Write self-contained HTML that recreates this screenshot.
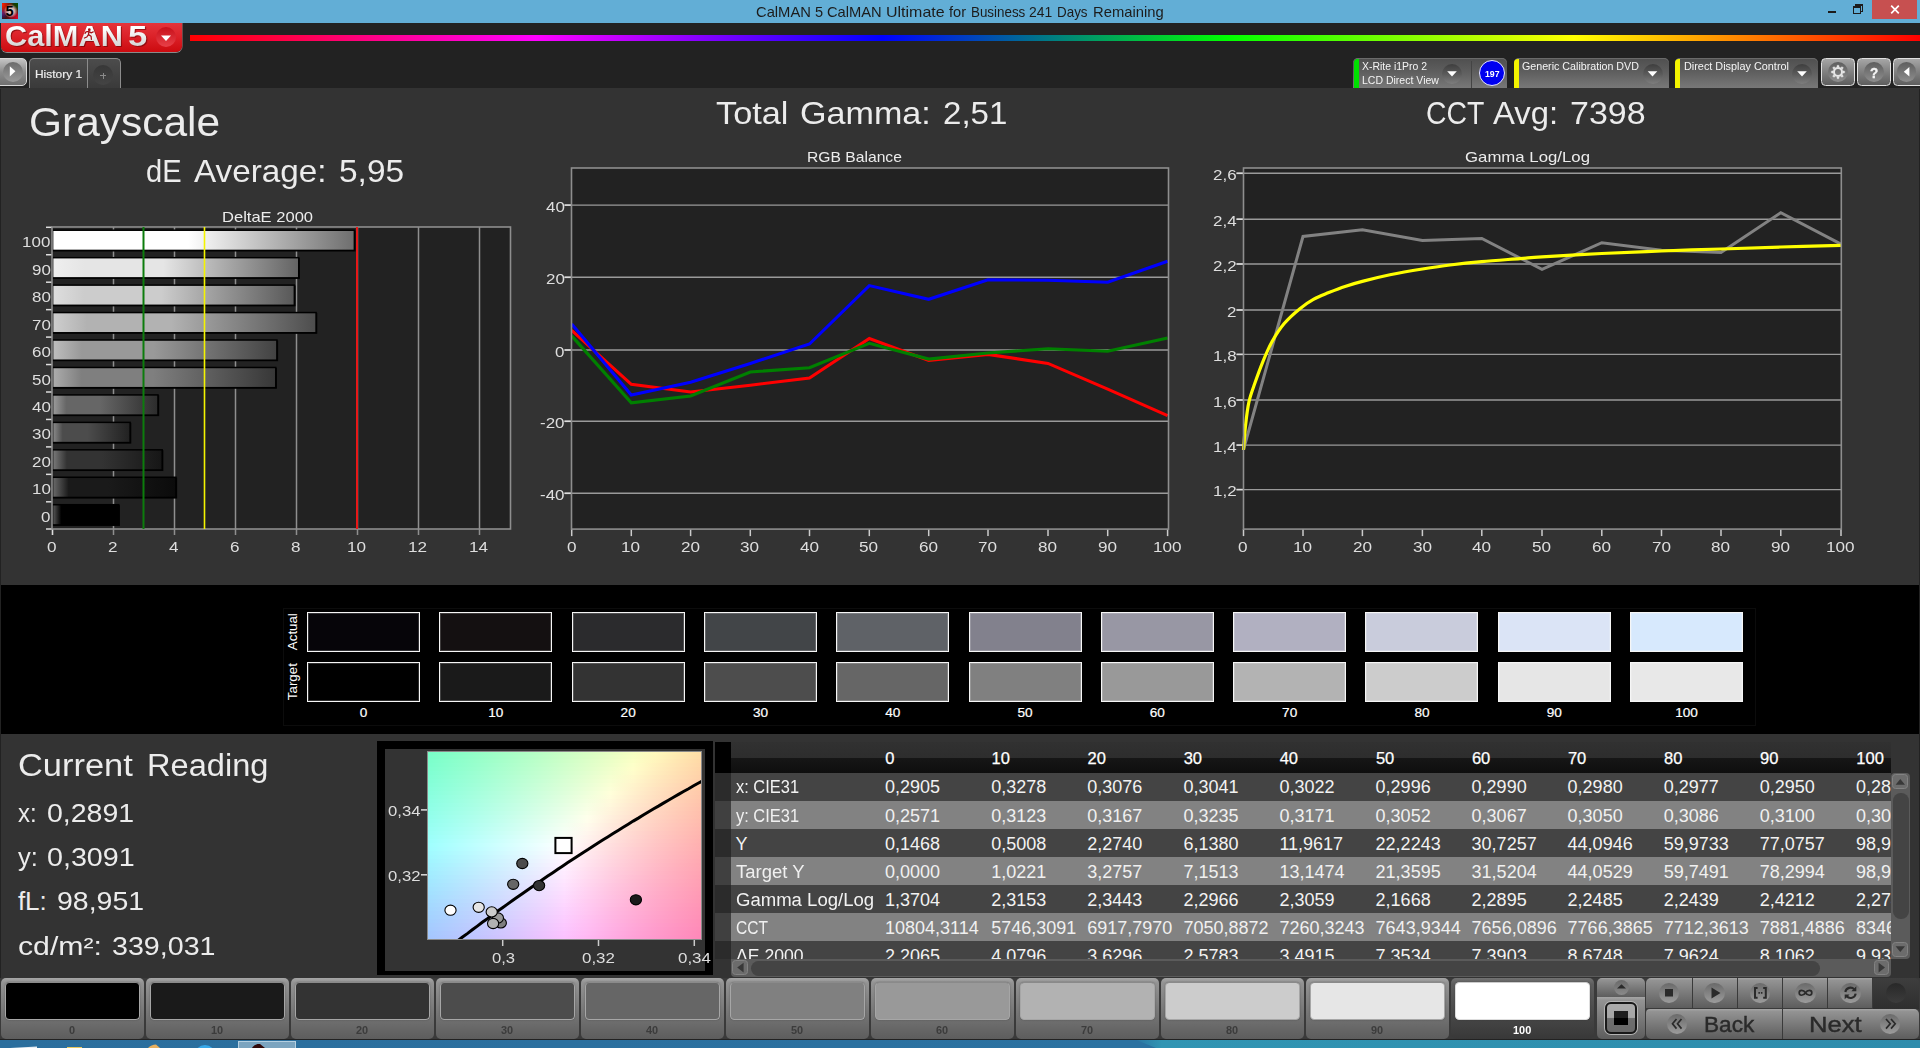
<!DOCTYPE html>
<html><head><meta charset="utf-8"><title>CalMAN 5</title>
<style>
html,body{margin:0;padding:0;}
html{overflow:hidden;width:1920px;height:1048px;background:#333;}
body{width:1920px;height:1048px;overflow:hidden;background:#333;position:relative;font-family:"Liberation Sans",sans-serif;}
.b{position:absolute;box-sizing:border-box;}
.t{position:absolute;white-space:nowrap;transform-origin:0 50%;display:block;}
svg{position:absolute;left:0;top:0;overflow:visible;}
.ck{position:absolute;border-radius:50%;}
</style></head><body>

<div class="b" style="left:0px;top:0px;width:1920px;height:23px;background:#62aed6;"></div>
<div class="b" style="left:2px;top:3px;width:16px;height:16px;background:radial-gradient(circle at 55% 50%,rgba(235,245,225,.95) 0,rgba(240,200,200,.8) 32%,rgba(255,255,255,0) 58%),radial-gradient(circle at 0% 10%,#ff2000 0,rgba(255,32,0,0) 55%),radial-gradient(circle at 100% 5%,#005000 0,rgba(0,80,0,0) 50%),radial-gradient(circle at 100% 95%,#e00028 0,rgba(224,0,40,0) 55%),radial-gradient(circle at 0% 62%,#3020a0 0,rgba(48,32,160,0) 35%),#401010;overflow:hidden;"><span class="t" style="left:3.6px;top:0.8px;font-size:14.5px;line-height:14.5px;font-weight:bold;color:#000;">5</span></div>
<span class="t" style="left:755.80px;top:3.90px;font-size:15px;line-height:15px;color:#1c1c1c;transform:scaleX(0.9830);">CalMAN</span>
<span class="t" style="left:814.80px;top:3.90px;font-size:15px;line-height:15px;color:#1c1c1c;transform:scaleX(0.9697);">5</span>
<span class="t" style="left:826.80px;top:3.90px;font-size:15px;line-height:15px;color:#1c1c1c;transform:scaleX(0.9794);">CalMAN</span>
<span class="t" style="left:885.60px;top:3.90px;font-size:15px;line-height:15px;color:#1c1c1c;transform:scaleX(1.0655);">Ultimate</span>
<span class="t" style="left:948.60px;top:3.90px;font-size:15px;line-height:15px;color:#1c1c1c;transform:scaleX(0.9714);">for</span>
<span class="t" style="left:970.80px;top:3.90px;font-size:15px;line-height:15px;color:#1c1c1c;transform:scaleX(0.8922);">Business</span>
<span class="t" style="left:1028.60px;top:3.90px;font-size:15px;line-height:15px;color:#1c1c1c;transform:scaleX(0.9280);">241</span>
<span class="t" style="left:1057.40px;top:3.90px;font-size:15px;line-height:15px;color:#1c1c1c;transform:scaleX(0.8934);">Days</span>
<span class="t" style="left:1092.80px;top:3.90px;font-size:15px;line-height:15px;color:#1c1c1c;transform:scaleX(0.9854);">Remaining</span>
<div class="b" style="left:1828px;top:11px;width:8px;height:2px;background:#1c1c1c;"></div>
<div class="b" style="left:1855px;top:4px;width:8px;height:8px;border:1px solid #1c1c1c;border-top-width:2px;"></div>
<div class="b" style="left:1853px;top:6px;width:8px;height:8px;border:1px solid #1c1c1c;border-top-width:2px;background:#62aed6;"></div>
<div class="b" style="left:1872px;top:0px;width:45px;height:19px;background:#c75050;"></div>
<svg width="1920" height="23"><path d="M1891.2 5.7l7.6 7.6M1898.8 5.7l-7.6 7.6" stroke="#fff" stroke-width="1.7" fill="none"/></svg>
<div class="b" style="left:0px;top:23px;width:1920px;height:65.2px;background:#222;"></div>
<div class="b" style="left:190px;top:35.3px;width:1730px;height:5.5px;background:linear-gradient(90deg,#ff0000 0%,#ff00ff 20%,#0000ff 40%,#00ff00 60%,#ffff00 80%,#ff0000 100%);"></div>
<div class="b" style="left:1px;top:23px;width:181px;height:29px;background:linear-gradient(180deg,#e4353c 0%,#dc2229 45%,#cc0a0f 100%);border-radius:0 0 6px 6px;box-shadow:0 1px 0 #8a8a8a,1px 0 0 #6a4a4a;"></div>
<span class="t" style="left:5.20px;top:21.03px;font-size:29.5px;line-height:29.5px;color:#f0f0f0;font-weight:bold;transform:scaleX(1.0425);background:linear-gradient(180deg,#fff 25%,#d4d4d4 85%);-webkit-background-clip:text;background-clip:text;-webkit-text-fill-color:transparent;filter:drop-shadow(1px 1px 0.6px rgba(90,0,0,.55));">CalMAN</span>
<span class="t" style="left:128.20px;top:21.03px;font-size:29.5px;line-height:29.5px;color:#f0f0f0;font-weight:bold;transform:scaleX(1.1758);background:linear-gradient(180deg,#fff 25%,#d4d4d4 85%);-webkit-background-clip:text;background-clip:text;-webkit-text-fill-color:transparent;filter:drop-shadow(1px 1px 0.6px rgba(90,0,0,.55));">5</span>
<div class="ck" style="left:156px;top:27px;width:20px;height:20px;background:linear-gradient(180deg,#c8101a,#e84048);"></div>
<svg width="200" height="60"><path d="M161 35.5h10l-5 5.5z" fill="#fff"/><path d="M89.3 28.2L84.6 39.2H94z" fill="#f1f1f1"/><g stroke="#a40e14" stroke-width="1.25" fill="none" stroke-linecap="round" stroke-linejoin="round"><circle cx="89.3" cy="29.7" r="0.75" fill="#a40e14"/><path d="M89 31.2L88.45 34.6M88.8 31.4L86 31.8L85 33.3M89.2 31.9L91.4 32.8L93.2 31.9M88.45 34.6L86.8 37L84.5 38M88.45 34.6L91.1 36.2L91.4 39.3"/></g></svg>
<div class="b" style="left:-2px;top:58px;width:29.2px;height:27.9px;border:1px solid #d8d8d8;border-radius:0 5px 5px 0;background:linear-gradient(180deg,#c4c4c4,#8c8c8c 50%,#707070);"></div>
<div class="ck" style="left:3px;top:62px;width:20px;height:20px;background:linear-gradient(180deg,#6c6c6c,#9a9a9a);"></div>
<svg width="200" height="100"><path d="M9.8 66.2l5.6 5.1-5.6 5.1z" fill="#fff"/></svg>
<div class="b" style="left:29px;top:58px;width:91.8px;height:30.2px;border:1px solid #8c8c8c;border-bottom:none;border-radius:5px 5px 0 0;background:linear-gradient(180deg,#4c4c4c,#3a3a3a);"></div>
<div class="b" style="left:87px;top:59px;width:1px;height:29.2px;background:#8c8c8c;"></div>
<span class="t" style="left:35.20px;top:68.61px;font-size:11.8px;line-height:11.8px;color:#ececec;transform:scaleX(1.0119);-webkit-text-stroke:0.2px #ececec;">History 1</span>
<div class="ck" style="left:93px;top:65px;width:20px;height:20px;background:linear-gradient(180deg,#373737,#444);"></div>
<div class="b" style="left:100px;top:75px;width:6px;height:1px;background:#8a8a8a;"></div>
<div class="b" style="left:102.5px;top:72.5px;width:1px;height:6px;background:#8a8a8a;"></div>
<div class="b" style="left:1353px;top:58px;width:153.8px;height:30.2px;border-radius:5px 5px 0 0;background:linear-gradient(180deg,#4f4f4f,#5e5e5e 45%,#787878);box-shadow:inset 0 1px 0 #6a6a6a;"></div><div class="b" style="left:1353.6px;top:58.6px;width:5.3px;height:29.6px;background:#00e000;border-radius:4px 0 0 0;"></div><div class="ck" style="left:1442px;top:63.5px;width:20px;height:20px;background:linear-gradient(180deg,#3e3e3e,#5a5a5a 50%,#7e7e7e);"></div><svg width="1920" height="100"><path d="M1447.2 71.2h9.6l-4.8 5.2z" fill="#fff"/></svg>
<span class="t" style="left:1362.00px;top:61.07px;font-size:11.5px;line-height:11.5px;color:#f4f4f4;transform:scaleX(0.9091);">X-Rite i1Pro 2</span>
<span class="t" style="left:1362.00px;top:74.87px;font-size:11.5px;line-height:11.5px;color:#f4f4f4;transform:scaleX(0.9139);">LCD Direct View</span>
<div class="b" style="left:1471px;top:61px;width:1px;height:27.2px;background:#444;"></div>
<div class="ck" style="left:1478.5px;top:60px;width:26px;height:26px;background:#0000f0;border:1px solid #e8e8ff;box-sizing:border-box;"></div>
<span class="t" style="left:1484.50px;top:68.56px;font-size:9.5px;line-height:9.5px;color:#fff;font-weight:bold;transform:scaleX(0.9206);">197</span>
<div class="b" style="left:1513.5px;top:58px;width:155px;height:30.2px;border-radius:5px 5px 0 0;background:linear-gradient(180deg,#4f4f4f,#5e5e5e 45%,#787878);box-shadow:inset 0 1px 0 #6a6a6a;"></div><div class="b" style="left:1514.1px;top:58.6px;width:5.3px;height:29.6px;background:#f4f400;border-radius:4px 0 0 0;"></div><div class="ck" style="left:1642.5px;top:63.5px;width:20px;height:20px;background:linear-gradient(180deg,#3e3e3e,#5a5a5a 50%,#7e7e7e);"></div><svg width="1920" height="100"><path d="M1647.7 71.2h9.6l-4.8 5.2z" fill="#fff"/></svg>
<span class="t" style="left:1522.00px;top:61.07px;font-size:11.5px;line-height:11.5px;color:#f4f4f4;transform:scaleX(0.9286);">Generic Calibration DVD</span>
<div class="b" style="left:1674.6px;top:58px;width:143.5px;height:30.2px;border-radius:5px 5px 0 0;background:linear-gradient(180deg,#4f4f4f,#5e5e5e 45%,#787878);box-shadow:inset 0 1px 0 #6a6a6a;"></div><div class="b" style="left:1675.1999999999998px;top:58.6px;width:5.3px;height:29.6px;background:#f4f400;border-radius:4px 0 0 0;"></div><div class="ck" style="left:1792px;top:63.5px;width:20px;height:20px;background:linear-gradient(180deg,#3e3e3e,#5a5a5a 50%,#7e7e7e);"></div><svg width="1920" height="100"><path d="M1797.2 71.2h9.6l-4.8 5.2z" fill="#fff"/></svg>
<span class="t" style="left:1684.00px;top:61.07px;font-size:11.5px;line-height:11.5px;color:#f4f4f4;transform:scaleX(0.9438);">Direct Display Control</span>
<div class="b" style="left:1821px;top:58px;width:34px;height:28.2px;border:1px solid #e0e0e0;border-radius:4.5px;background:linear-gradient(180deg,#a6a6a6,#808080 50%,#5e5e5e);"></div><div class="ck" style="left:1828px;top:62.1px;width:19.8px;height:19.8px;background:linear-gradient(180deg,#5e5e5e,#8e8e8e);"></div>
<div class="b" style="left:1857px;top:58px;width:34px;height:28.2px;border:1px solid #e0e0e0;border-radius:4.5px;background:linear-gradient(180deg,#a6a6a6,#808080 50%,#5e5e5e);"></div><div class="ck" style="left:1864px;top:62.1px;width:19.8px;height:19.8px;background:linear-gradient(180deg,#5e5e5e,#8e8e8e);"></div>
<div class="b" style="left:1893px;top:58px;width:34px;height:28.2px;border:1px solid #e0e0e0;border-radius:4.5px;background:linear-gradient(180deg,#a6a6a6,#808080 50%,#5e5e5e);"></div><div class="ck" style="left:1896.7px;top:62.1px;width:19.8px;height:19.8px;background:linear-gradient(180deg,#5e5e5e,#8e8e8e);"></div>
<svg width="1920" height="100"><g transform="translate(1838 72)" fill="none" stroke="#e6e6e6"><circle r="4" stroke-width="2"/><path d="M-1.2 -4.8L-0.8 -6.7H0.8L1.2 -4.8z" fill="#e6e6e6" stroke-width="0.4" transform="rotate(0)"/><path d="M-1.2 -4.8L-0.8 -6.7H0.8L1.2 -4.8z" fill="#e6e6e6" stroke-width="0.4" transform="rotate(45)"/><path d="M-1.2 -4.8L-0.8 -6.7H0.8L1.2 -4.8z" fill="#e6e6e6" stroke-width="0.4" transform="rotate(90)"/><path d="M-1.2 -4.8L-0.8 -6.7H0.8L1.2 -4.8z" fill="#e6e6e6" stroke-width="0.4" transform="rotate(135)"/><path d="M-1.2 -4.8L-0.8 -6.7H0.8L1.2 -4.8z" fill="#e6e6e6" stroke-width="0.4" transform="rotate(180)"/><path d="M-1.2 -4.8L-0.8 -6.7H0.8L1.2 -4.8z" fill="#e6e6e6" stroke-width="0.4" transform="rotate(225)"/><path d="M-1.2 -4.8L-0.8 -6.7H0.8L1.2 -4.8z" fill="#e6e6e6" stroke-width="0.4" transform="rotate(270)"/><path d="M-1.2 -4.8L-0.8 -6.7H0.8L1.2 -4.8z" fill="#e6e6e6" stroke-width="0.4" transform="rotate(315)"/></g><path d="M1909.4 66.9v9.6l-5.6-4.8z" fill="#fff"/></svg>
<span class="t" style="left:1870.20px;top:65.23px;font-size:15.2px;line-height:15.2px;color:#f4f4f4;font-weight:bold;transform:scaleX(0.8865);-webkit-text-stroke:0.4px #f4f4f4;">?</span>
<div class="b" style="left:0px;top:89px;width:1px;height:889px;background:#222;"></div>
<div class="b" style="left:1919px;top:89px;width:1px;height:889px;background:#222;"></div>
<span class="t" style="left:29.20px;top:102.02px;font-size:40.5px;line-height:40.5px;color:#ececec;transform:scaleX(1.0480);">Grayscale</span>
<span class="t" style="left:145.80px;top:156.48px;font-size:30.5px;line-height:30.5px;color:#ececec;transform:scaleX(0.9530);">dE</span>
<span class="t" style="left:193.80px;top:156.48px;font-size:30.5px;line-height:30.5px;color:#ececec;transform:scaleX(1.0905);">Average:</span>
<span class="t" style="left:338.80px;top:156.48px;font-size:30.5px;line-height:30.5px;color:#ececec;transform:scaleX(1.0970);">5,95</span>
<span class="t" style="left:222.00px;top:209.00px;font-size:15px;line-height:15px;color:#ececec;transform:scaleX(1.1030);">DeltaE 2000</span>
<span class="t" style="left:715.80px;top:97.58px;font-size:30.5px;line-height:30.5px;color:#ececec;transform:scaleX(1.1240);">Total</span>
<span class="t" style="left:800.00px;top:97.58px;font-size:30.5px;line-height:30.5px;color:#ececec;transform:scaleX(1.1179);">Gamma:</span>
<span class="t" style="left:942.50px;top:97.58px;font-size:30.5px;line-height:30.5px;color:#ececec;transform:scaleX(1.0835);">2,51</span>
<span class="t" style="left:807.00px;top:149.30px;font-size:15px;line-height:15px;color:#ececec;transform:scaleX(1.0440);">RGB Balance</span>
<span class="t" style="left:1425.60px;top:97.58px;font-size:30.5px;line-height:30.5px;color:#ececec;transform:scaleX(0.9307);">CCT</span>
<span class="t" style="left:1493.30px;top:97.58px;font-size:30.5px;line-height:30.5px;color:#ececec;transform:scaleX(1.0760);">Avg:</span>
<span class="t" style="left:1570.20px;top:97.58px;font-size:30.5px;line-height:30.5px;color:#ececec;transform:scaleX(1.1144);">7398</span>
<span class="t" style="left:1465.00px;top:149.30px;font-size:15px;line-height:15px;color:#ececec;transform:scaleX(1.1186);">Gamma Log/Log</span>
<svg width="1920" height="600" shape-rendering="auto">
<rect x="52" y="227" width="458.5" height="302" fill="#222222"/>
<path d="M113.5 227V535" stroke="#8f8f8f" stroke-width="1.5"/>
<path d="M174.5 227V535" stroke="#8f8f8f" stroke-width="1.5"/>
<path d="M235.5 227V535" stroke="#8f8f8f" stroke-width="1.5"/>
<path d="M296.5 227V535" stroke="#8f8f8f" stroke-width="1.5"/>
<path d="M357.5 227V535" stroke="#8f8f8f" stroke-width="1.5"/>
<path d="M418.5 227V535" stroke="#8f8f8f" stroke-width="1.5"/>
<path d="M479.5 227V535" stroke="#8f8f8f" stroke-width="1.5"/>
<path d="M52.5 529v6" stroke="#ddd" stroke-width="1.6"/>
<defs>
<linearGradient id="g0" x1="0" x2="1" y1="0" y2="0"><stop offset="0" stop-color="#5c5c5c"/><stop offset="0.13" stop-color="#000000"/><stop offset="0.45" stop-color="#000000"/><stop offset="1" stop-color="#000000"/></linearGradient>
<linearGradient id="g10" x1="0" x2="1" y1="0" y2="0"><stop offset="0" stop-color="#6c6c6c"/><stop offset="0.13" stop-color="#1a1a1a"/><stop offset="0.45" stop-color="#1a1a1a"/><stop offset="1" stop-color="#0b0b0b"/></linearGradient>
<linearGradient id="g20" x1="0" x2="1" y1="0" y2="0"><stop offset="0" stop-color="#7c7c7c"/><stop offset="0.13" stop-color="#333333"/><stop offset="0.45" stop-color="#333333"/><stop offset="1" stop-color="#161616"/></linearGradient>
<linearGradient id="g30" x1="0" x2="1" y1="0" y2="0"><stop offset="0" stop-color="#8d8d8d"/><stop offset="0.13" stop-color="#4c4c4c"/><stop offset="0.45" stop-color="#4c4c4c"/><stop offset="1" stop-color="#212121"/></linearGradient>
<linearGradient id="g40" x1="0" x2="1" y1="0" y2="0"><stop offset="0" stop-color="#9d9d9d"/><stop offset="0.13" stop-color="#666666"/><stop offset="0.45" stop-color="#666666"/><stop offset="1" stop-color="#2c2c2c"/></linearGradient>
<linearGradient id="g50" x1="0" x2="1" y1="0" y2="0"><stop offset="0" stop-color="#adadad"/><stop offset="0.13" stop-color="#7f7f7f"/><stop offset="0.45" stop-color="#7f7f7f"/><stop offset="1" stop-color="#373737"/></linearGradient>
<linearGradient id="g60" x1="0" x2="1" y1="0" y2="0"><stop offset="0" stop-color="#bebebe"/><stop offset="0.13" stop-color="#999999"/><stop offset="0.45" stop-color="#999999"/><stop offset="1" stop-color="#424242"/></linearGradient>
<linearGradient id="g70" x1="0" x2="1" y1="0" y2="0"><stop offset="0" stop-color="#cecece"/><stop offset="0.13" stop-color="#b2b2b2"/><stop offset="0.45" stop-color="#b2b2b2"/><stop offset="1" stop-color="#4d4d4d"/></linearGradient>
<linearGradient id="g80" x1="0" x2="1" y1="0" y2="0"><stop offset="0" stop-color="#dedede"/><stop offset="0.13" stop-color="#cccccc"/><stop offset="0.45" stop-color="#cccccc"/><stop offset="1" stop-color="#585858"/></linearGradient>
<linearGradient id="g90" x1="0" x2="1" y1="0" y2="0"><stop offset="0" stop-color="#efefef"/><stop offset="0.13" stop-color="#e5e5e5"/><stop offset="0.45" stop-color="#e5e5e5"/><stop offset="1" stop-color="#636363"/></linearGradient>
<linearGradient id="g100" x1="0" x2="1" y1="0" y2="0"><stop offset="0" stop-color="#ffffff"/><stop offset="0.13" stop-color="#ffffff"/><stop offset="0.45" stop-color="#ffffff"/><stop offset="1" stop-color="#6e6e6e"/></linearGradient>
</defs>
<rect x="52.4" y="505.12" width="67.60" height="20.8" fill="#060606"/>
<rect x="52.6" y="504.72" width="66.20"  height="20.2" fill="url(#g0)" stroke="#000" stroke-width="1.5"/>
<path d="M46 501.80h6" stroke="#ddd" stroke-width="1.5"/>
<rect x="52.4" y="477.68" width="124.73" height="20.8" fill="#060606"/>
<rect x="52.6" y="477.27" width="123.33"  height="20.2" fill="url(#g10)" stroke="#000" stroke-width="1.5"/>
<path d="M46 474.35h6" stroke="#ddd" stroke-width="1.5"/>
<rect x="52.4" y="450.23" width="111.00" height="20.8" fill="#060606"/>
<rect x="52.6" y="449.82" width="109.60"  height="20.2" fill="url(#g20)" stroke="#000" stroke-width="1.5"/>
<path d="M46 446.90h6" stroke="#ddd" stroke-width="1.5"/>
<rect x="52.4" y="422.78" width="78.94" height="20.8" fill="#060606"/>
<rect x="52.6" y="422.38" width="77.54"  height="20.2" fill="url(#g30)" stroke="#000" stroke-width="1.5"/>
<path d="M46 419.45h6" stroke="#ddd" stroke-width="1.5"/>
<rect x="52.4" y="395.32" width="106.79" height="20.8" fill="#060606"/>
<rect x="52.6" y="394.92" width="105.39"  height="20.2" fill="url(#g40)" stroke="#000" stroke-width="1.5"/>
<path d="M46 392.00h6" stroke="#ddd" stroke-width="1.5"/>
<rect x="52.4" y="367.88" width="224.58" height="20.8" fill="#060606"/>
<rect x="52.6" y="367.48" width="223.18"  height="20.2" fill="url(#g50)" stroke="#000" stroke-width="1.5"/>
<path d="M46 364.55h6" stroke="#ddd" stroke-width="1.5"/>
<rect x="52.4" y="340.43" width="225.70" height="20.8" fill="#060606"/>
<rect x="52.6" y="340.02" width="224.30"  height="20.2" fill="url(#g60)" stroke="#000" stroke-width="1.5"/>
<path d="M46 337.10h6" stroke="#ddd" stroke-width="1.5"/>
<rect x="52.4" y="312.98" width="264.88" height="20.8" fill="#060606"/>
<rect x="52.6" y="312.57" width="263.48"  height="20.2" fill="url(#g70)" stroke="#000" stroke-width="1.5"/>
<path d="M46 309.65h6" stroke="#ddd" stroke-width="1.5"/>
<rect x="52.4" y="285.53" width="243.15" height="20.8" fill="#060606"/>
<rect x="52.6" y="285.12" width="241.75"  height="20.2" fill="url(#g80)" stroke="#000" stroke-width="1.5"/>
<path d="M46 282.20h6" stroke="#ddd" stroke-width="1.5"/>
<rect x="52.4" y="258.08" width="247.54" height="20.8" fill="#060606"/>
<rect x="52.6" y="257.68" width="246.14"  height="20.2" fill="url(#g90)" stroke="#000" stroke-width="1.5"/>
<path d="M46 254.75h6" stroke="#ddd" stroke-width="1.5"/>
<rect x="52.4" y="230.62" width="303.17" height="20.8" fill="#060606"/>
<rect x="52.6" y="230.22" width="301.76"  height="20.2" fill="url(#g100)" stroke="#000" stroke-width="1.5"/>
<path d="M46 227.30h6" stroke="#ddd" stroke-width="1.5"/>
<path d="M46 529h6" stroke="#ddd" stroke-width="1.5"/>
<rect x="52" y="227" width="458.5" height="302" fill="none" stroke="#8e8e8e" stroke-width="1.6"/>
<path d="M143.5 227V529" stroke="#0c7c0c" stroke-width="2"/>
<path d="M204.5 227V529" stroke="#f4f400" stroke-width="1.6"/>
<path d="M357 227V529" stroke="#e81818" stroke-width="2"/>
<rect x="571.5" y="168" width="597.0" height="361.1" fill="#222222"/>
<path d="M564.5 205.1H1168.5" stroke="#9a9a9a" stroke-width="1.4"/>
<path d="M564.5 205.1h7" stroke="#ddd" stroke-width="1.6"/>
<path d="M564.5 277.3H1168.5" stroke="#9a9a9a" stroke-width="1.4"/>
<path d="M564.5 277.3h7" stroke="#ddd" stroke-width="1.6"/>
<path d="M564.5 350H1168.5" stroke="#9a9a9a" stroke-width="1.4"/>
<path d="M564.5 350h7" stroke="#ddd" stroke-width="1.6"/>
<path d="M564.5 421.3H1168.5" stroke="#9a9a9a" stroke-width="1.4"/>
<path d="M564.5 421.3h7" stroke="#ddd" stroke-width="1.6"/>
<path d="M564.5 493.3H1168.5" stroke="#9a9a9a" stroke-width="1.4"/>
<path d="M564.5 493.3h7" stroke="#ddd" stroke-width="1.6"/>
<path d="M571.7 529.1v7" stroke="#ccc" stroke-width="1.5"/>
<path d="M631.3 529.1v7" stroke="#ccc" stroke-width="1.5"/>
<path d="M690.6 529.1v7" stroke="#ccc" stroke-width="1.5"/>
<path d="M750.3 529.1v7" stroke="#ccc" stroke-width="1.5"/>
<path d="M809.5 529.1v7" stroke="#ccc" stroke-width="1.5"/>
<path d="M869.3 529.1v7" stroke="#ccc" stroke-width="1.5"/>
<path d="M928.7 529.1v7" stroke="#ccc" stroke-width="1.5"/>
<path d="M988 529.1v7" stroke="#ccc" stroke-width="1.5"/>
<path d="M1048 529.1v7" stroke="#ccc" stroke-width="1.5"/>
<path d="M1107.7 529.1v7" stroke="#ccc" stroke-width="1.5"/>
<path d="M1167.6 529.1v7" stroke="#ccc" stroke-width="1.5"/>
<clipPath id="crgb"><rect x="570.0" y="168" width="598.5" height="361.1"/></clipPath><g clip-path="url(#crgb)">
<polyline points="571.7,330.4 631.3,384.3 690.6,392 750.3,385.2 809.5,378 869.3,338.5 928.7,360.4 988,354.4 1048,363.4 1107.7,389.1 1167.6,415.7" fill="none" stroke="#ff0000" stroke-width="3.1" stroke-linejoin="miter"/>
<polyline points="571.7,335.9 631.3,402.9 690.6,396 750.3,372 809.5,367.7 869.3,343.3 928.7,359.1 988,353 1048,348.8 1107.7,351.3 1167.6,338.1" fill="none" stroke="#008000" stroke-width="3.1" stroke-linejoin="miter"/>
<polyline points="571.7,323.9 631.3,395.1 690.6,382.3 750.3,363.4 809.5,344 869.3,285.6 928.7,299.3 988,279.7 1048,280.2 1107.7,282.3 1167.6,261.2" fill="none" stroke="#0000ff" stroke-width="3.1" stroke-linejoin="miter"/>
</g>
<rect x="571.5" y="168" width="597.0" height="361.1" fill="none" stroke="#8e8e8e" stroke-width="1.6"/>
<rect x="1243.5" y="168" width="597.8" height="361.1" fill="#222222"/>
<path d="M1236.5 173.3H1841.3" stroke="#9a9a9a" stroke-width="1.4"/>
<path d="M1236.5 173.3h7" stroke="#ddd" stroke-width="1.6"/>
<path d="M1236.5 219.2H1841.3" stroke="#9a9a9a" stroke-width="1.4"/>
<path d="M1236.5 219.2h7" stroke="#ddd" stroke-width="1.6"/>
<path d="M1236.5 264H1841.3" stroke="#9a9a9a" stroke-width="1.4"/>
<path d="M1236.5 264h7" stroke="#ddd" stroke-width="1.6"/>
<path d="M1236.5 310H1841.3" stroke="#9a9a9a" stroke-width="1.4"/>
<path d="M1236.5 310h7" stroke="#ddd" stroke-width="1.6"/>
<path d="M1236.5 354.4H1841.3" stroke="#9a9a9a" stroke-width="1.4"/>
<path d="M1236.5 354.4h7" stroke="#ddd" stroke-width="1.6"/>
<path d="M1236.5 400H1841.3" stroke="#9a9a9a" stroke-width="1.4"/>
<path d="M1236.5 400h7" stroke="#ddd" stroke-width="1.6"/>
<path d="M1236.5 445.1H1841.3" stroke="#9a9a9a" stroke-width="1.4"/>
<path d="M1236.5 445.1h7" stroke="#ddd" stroke-width="1.6"/>
<path d="M1236.5 489.6H1841.3" stroke="#9a9a9a" stroke-width="1.4"/>
<path d="M1236.5 489.6h7" stroke="#ddd" stroke-width="1.6"/>
<path d="M1243.5 529.1v7" stroke="#ccc" stroke-width="1.5"/>
<path d="M1303 529.1v7" stroke="#ccc" stroke-width="1.5"/>
<path d="M1362.4 529.1v7" stroke="#ccc" stroke-width="1.5"/>
<path d="M1422.4 529.1v7" stroke="#ccc" stroke-width="1.5"/>
<path d="M1481.8 529.1v7" stroke="#ccc" stroke-width="1.5"/>
<path d="M1542 529.1v7" stroke="#ccc" stroke-width="1.5"/>
<path d="M1601.8 529.1v7" stroke="#ccc" stroke-width="1.5"/>
<path d="M1661.5 529.1v7" stroke="#ccc" stroke-width="1.5"/>
<path d="M1721 529.1v7" stroke="#ccc" stroke-width="1.5"/>
<path d="M1780.8 529.1v7" stroke="#ccc" stroke-width="1.5"/>
<path d="M1841 529.1v7" stroke="#ccc" stroke-width="1.5"/>
<clipPath id="cgam"><rect x="1241.5" y="168" width="599.8" height="361.1"/></clipPath><g clip-path="url(#cgam)">
<polyline points="1243.5,449.5 1303,236.5 1362.4,229.7 1422.4,240.5 1481.8,238.5 1542,269.4 1601.8,242.7 1661.5,250.3 1721,252.5 1780.8,212.7 1841,244.1" fill="none" stroke="#828282" stroke-width="3"/>
<path d="M1243.5 450C1243.8 445.9 1244.6 433.8 1245.5 425.7C1246.4 417.6 1247.4 408.8 1249 401.6C1250.6 394.5 1252.7 389.4 1255 382.8C1257.3 376.2 1259.9 369.0 1262.7 362.1C1265.5 355.2 1268.5 347.9 1272.1 341.5C1275.7 335.1 1279.6 328.9 1284.2 323.5C1288.8 318.1 1294.7 312.9 1299.6 308.9C1304.5 304.9 1308.5 302.1 1313.4 299.4C1318.3 296.7 1323.5 294.8 1328.8 292.6C1334.1 290.5 1339.4 288.4 1345 286.5C1350.6 284.6 1354.8 283.3 1362.3 281.4C1369.8 279.4 1380.0 276.9 1390 274.8C1400.0 272.7 1412.4 270.6 1422.4 269C1432.4 267.4 1440.1 266.2 1450 265C1459.9 263.8 1470.0 262.7 1481.7 261.6C1493.4 260.5 1510.0 259.4 1520 258.6C1530.0 257.8 1528.4 257.7 1542 256.8C1555.6 256.0 1581.9 254.5 1601.8 253.5C1621.7 252.5 1641.6 251.8 1661.5 251C1681.4 250.2 1701.1 249.7 1721 249C1740.9 248.3 1760.8 247.6 1780.8 247C1800.8 246.4 1831.0 245.6 1841 245.3" fill="none" stroke="#ffff00" stroke-width="3.2" stroke-linejoin="round"/>
</g>
<rect x="1243.5" y="168" width="597.8" height="361.1" fill="none" stroke="#8e8e8e" stroke-width="1.6"/>
</svg>
<span class="t" style="left:41.29px;top:509.81px;font-size:14.9px;line-height:14.9px;color:#dedede;transform:scaleX(1.1400);">0</span>
<span class="t" style="left:31.78px;top:482.36px;font-size:14.9px;line-height:14.9px;color:#dedede;transform:scaleX(1.1400);">10</span>
<span class="t" style="left:31.78px;top:454.91px;font-size:14.9px;line-height:14.9px;color:#dedede;transform:scaleX(1.1400);">20</span>
<span class="t" style="left:31.78px;top:427.46px;font-size:14.9px;line-height:14.9px;color:#dedede;transform:scaleX(1.1400);">30</span>
<span class="t" style="left:31.78px;top:400.01px;font-size:14.9px;line-height:14.9px;color:#dedede;transform:scaleX(1.1400);">40</span>
<span class="t" style="left:31.78px;top:372.56px;font-size:14.9px;line-height:14.9px;color:#dedede;transform:scaleX(1.1400);">50</span>
<span class="t" style="left:31.78px;top:345.11px;font-size:14.9px;line-height:14.9px;color:#dedede;transform:scaleX(1.1400);">60</span>
<span class="t" style="left:31.78px;top:317.66px;font-size:14.9px;line-height:14.9px;color:#dedede;transform:scaleX(1.1400);">70</span>
<span class="t" style="left:31.78px;top:290.21px;font-size:14.9px;line-height:14.9px;color:#dedede;transform:scaleX(1.1400);">80</span>
<span class="t" style="left:31.78px;top:262.76px;font-size:14.9px;line-height:14.9px;color:#dedede;transform:scaleX(1.1400);">90</span>
<span class="t" style="left:22.26px;top:235.31px;font-size:14.9px;line-height:14.9px;color:#dedede;transform:scaleX(1.1400);">100</span>
<span class="t" style="left:46.90px;top:539.69px;font-size:14.9px;line-height:14.9px;color:#dedede;transform:scaleX(1.1500);">0</span>
<span class="t" style="left:107.90px;top:539.69px;font-size:14.9px;line-height:14.9px;color:#dedede;transform:scaleX(1.1500);">2</span>
<span class="t" style="left:168.90px;top:539.69px;font-size:14.9px;line-height:14.9px;color:#dedede;transform:scaleX(1.1500);">4</span>
<span class="t" style="left:229.90px;top:539.69px;font-size:14.9px;line-height:14.9px;color:#dedede;transform:scaleX(1.1500);">6</span>
<span class="t" style="left:290.90px;top:539.69px;font-size:14.9px;line-height:14.9px;color:#dedede;transform:scaleX(1.1500);">8</span>
<span class="t" style="left:347.10px;top:539.69px;font-size:14.9px;line-height:14.9px;color:#dedede;transform:scaleX(1.1500);">10</span>
<span class="t" style="left:408.10px;top:539.69px;font-size:14.9px;line-height:14.9px;color:#dedede;transform:scaleX(1.1500);">12</span>
<span class="t" style="left:469.10px;top:539.69px;font-size:14.9px;line-height:14.9px;color:#dedede;transform:scaleX(1.1500);">14</span>
<span class="t" style="left:545.78px;top:199.69px;font-size:14.9px;line-height:14.9px;color:#dedede;transform:scaleX(1.1400);">40</span>
<span class="t" style="left:545.78px;top:271.89px;font-size:14.9px;line-height:14.9px;color:#dedede;transform:scaleX(1.1400);">20</span>
<span class="t" style="left:555.29px;top:344.59px;font-size:14.9px;line-height:14.9px;color:#dedede;transform:scaleX(1.1400);">0</span>
<span class="t" style="left:540.08px;top:415.89px;font-size:14.9px;line-height:14.9px;color:#dedede;transform:scaleX(1.1400);">-20</span>
<span class="t" style="left:540.08px;top:487.89px;font-size:14.9px;line-height:14.9px;color:#dedede;transform:scaleX(1.1400);">-40</span>
<span class="t" style="left:566.60px;top:539.69px;font-size:14.9px;line-height:14.9px;color:#dedede;transform:scaleX(1.1500);">0</span>
<span class="t" style="left:621.40px;top:539.69px;font-size:14.9px;line-height:14.9px;color:#dedede;transform:scaleX(1.1500);">10</span>
<span class="t" style="left:680.70px;top:539.69px;font-size:14.9px;line-height:14.9px;color:#dedede;transform:scaleX(1.1500);">20</span>
<span class="t" style="left:740.40px;top:539.69px;font-size:14.9px;line-height:14.9px;color:#dedede;transform:scaleX(1.1500);">30</span>
<span class="t" style="left:799.60px;top:539.69px;font-size:14.9px;line-height:14.9px;color:#dedede;transform:scaleX(1.1500);">40</span>
<span class="t" style="left:859.40px;top:539.69px;font-size:14.9px;line-height:14.9px;color:#dedede;transform:scaleX(1.1500);">50</span>
<span class="t" style="left:918.80px;top:539.69px;font-size:14.9px;line-height:14.9px;color:#dedede;transform:scaleX(1.1500);">60</span>
<span class="t" style="left:978.10px;top:539.69px;font-size:14.9px;line-height:14.9px;color:#dedede;transform:scaleX(1.1500);">70</span>
<span class="t" style="left:1038.10px;top:539.69px;font-size:14.9px;line-height:14.9px;color:#dedede;transform:scaleX(1.1500);">80</span>
<span class="t" style="left:1097.80px;top:539.69px;font-size:14.9px;line-height:14.9px;color:#dedede;transform:scaleX(1.1500);">90</span>
<span class="t" style="left:1152.91px;top:539.69px;font-size:14.9px;line-height:14.9px;color:#dedede;transform:scaleX(1.1500);">100</span>
<span class="t" style="left:1213.02px;top:167.89px;font-size:14.9px;line-height:14.9px;color:#dedede;transform:scaleX(1.1400);">2,6</span>
<span class="t" style="left:1213.02px;top:213.79px;font-size:14.9px;line-height:14.9px;color:#dedede;transform:scaleX(1.1400);">2,4</span>
<span class="t" style="left:1213.02px;top:258.59px;font-size:14.9px;line-height:14.9px;color:#dedede;transform:scaleX(1.1400);">2,2</span>
<span class="t" style="left:1227.29px;top:304.59px;font-size:14.9px;line-height:14.9px;color:#dedede;transform:scaleX(1.1400);">2</span>
<span class="t" style="left:1213.02px;top:348.99px;font-size:14.9px;line-height:14.9px;color:#dedede;transform:scaleX(1.1400);">1,8</span>
<span class="t" style="left:1213.02px;top:394.59px;font-size:14.9px;line-height:14.9px;color:#dedede;transform:scaleX(1.1400);">1,6</span>
<span class="t" style="left:1213.02px;top:439.69px;font-size:14.9px;line-height:14.9px;color:#dedede;transform:scaleX(1.1400);">1,4</span>
<span class="t" style="left:1213.02px;top:484.19px;font-size:14.9px;line-height:14.9px;color:#dedede;transform:scaleX(1.1400);">1,2</span>
<span class="t" style="left:1238.40px;top:539.69px;font-size:14.9px;line-height:14.9px;color:#dedede;transform:scaleX(1.1500);">0</span>
<span class="t" style="left:1293.10px;top:539.69px;font-size:14.9px;line-height:14.9px;color:#dedede;transform:scaleX(1.1500);">10</span>
<span class="t" style="left:1352.50px;top:539.69px;font-size:14.9px;line-height:14.9px;color:#dedede;transform:scaleX(1.1500);">20</span>
<span class="t" style="left:1412.50px;top:539.69px;font-size:14.9px;line-height:14.9px;color:#dedede;transform:scaleX(1.1500);">30</span>
<span class="t" style="left:1471.90px;top:539.69px;font-size:14.9px;line-height:14.9px;color:#dedede;transform:scaleX(1.1500);">40</span>
<span class="t" style="left:1532.10px;top:539.69px;font-size:14.9px;line-height:14.9px;color:#dedede;transform:scaleX(1.1500);">50</span>
<span class="t" style="left:1591.90px;top:539.69px;font-size:14.9px;line-height:14.9px;color:#dedede;transform:scaleX(1.1500);">60</span>
<span class="t" style="left:1651.60px;top:539.69px;font-size:14.9px;line-height:14.9px;color:#dedede;transform:scaleX(1.1500);">70</span>
<span class="t" style="left:1711.10px;top:539.69px;font-size:14.9px;line-height:14.9px;color:#dedede;transform:scaleX(1.1500);">80</span>
<span class="t" style="left:1770.90px;top:539.69px;font-size:14.9px;line-height:14.9px;color:#dedede;transform:scaleX(1.1500);">90</span>
<span class="t" style="left:1826.31px;top:539.69px;font-size:14.9px;line-height:14.9px;color:#dedede;transform:scaleX(1.1500);">100</span>
<div class="b" style="left:1px;top:585px;width:1918px;height:148.5px;background:#000;"></div>
<div class="b" style="left:283px;top:607.5px;width:1472.5px;height:118.5px;border:1px solid #0c0c0c;"></div>
<div class="b" style="left:307.0px;top:612px;width:113px;height:40px;background:#060509;border:1.2px solid #f6f6f6;box-shadow:inset 0 0 0 1px rgba(255,255,255,.18);"></div>
<div class="b" style="left:307.0px;top:662px;width:113px;height:40px;background:#000000;border:1.2px solid #f6f6f6;box-shadow:inset 0 0 0 1px rgba(255,255,255,.18);"></div>
<span class="t" style="left:359.75px;top:706.19px;font-size:13.6px;line-height:13.6px;color:#fff;-webkit-text-stroke:0.2px #fff;">0</span>
<div class="b" style="left:439.3px;top:612px;width:113px;height:40px;background:#141011;border:1.2px solid #f6f6f6;box-shadow:inset 0 0 0 1px rgba(255,255,255,.18);"></div>
<div class="b" style="left:439.3px;top:662px;width:113px;height:40px;background:#1a1a1a;border:1.2px solid #f6f6f6;box-shadow:inset 0 0 0 1px rgba(255,255,255,.18);"></div>
<span class="t" style="left:488.29px;top:706.19px;font-size:13.6px;line-height:13.6px;color:#fff;-webkit-text-stroke:0.2px #fff;">10</span>
<div class="b" style="left:571.6px;top:612px;width:113px;height:40px;background:#2b2b2d;border:1.2px solid #f6f6f6;box-shadow:inset 0 0 0 1px rgba(255,255,255,.18);"></div>
<div class="b" style="left:571.6px;top:662px;width:113px;height:40px;background:#333333;border:1.2px solid #f6f6f6;box-shadow:inset 0 0 0 1px rgba(255,255,255,.18);"></div>
<span class="t" style="left:620.59px;top:706.19px;font-size:13.6px;line-height:13.6px;color:#fff;-webkit-text-stroke:0.2px #fff;">20</span>
<div class="b" style="left:703.9px;top:612px;width:113px;height:40px;background:#424548;border:1.2px solid #f6f6f6;box-shadow:inset 0 0 0 1px rgba(255,255,255,.18);"></div>
<div class="b" style="left:703.9px;top:662px;width:113px;height:40px;background:#4d4d4d;border:1.2px solid #f6f6f6;box-shadow:inset 0 0 0 1px rgba(255,255,255,.18);"></div>
<span class="t" style="left:752.89px;top:706.19px;font-size:13.6px;line-height:13.6px;color:#fff;-webkit-text-stroke:0.2px #fff;">30</span>
<div class="b" style="left:836.2px;top:612px;width:113px;height:40px;background:#5f6267;border:1.2px solid #f6f6f6;box-shadow:inset 0 0 0 1px rgba(255,255,255,.18);"></div>
<div class="b" style="left:836.2px;top:662px;width:113px;height:40px;background:#666666;border:1.2px solid #f6f6f6;box-shadow:inset 0 0 0 1px rgba(255,255,255,.18);"></div>
<span class="t" style="left:885.19px;top:706.19px;font-size:13.6px;line-height:13.6px;color:#fff;-webkit-text-stroke:0.2px #fff;">40</span>
<div class="b" style="left:968.5px;top:612px;width:113px;height:40px;background:#82818d;border:1.2px solid #f6f6f6;box-shadow:inset 0 0 0 1px rgba(255,255,255,.18);"></div>
<div class="b" style="left:968.5px;top:662px;width:113px;height:40px;background:#808080;border:1.2px solid #f6f6f6;box-shadow:inset 0 0 0 1px rgba(255,255,255,.18);"></div>
<span class="t" style="left:1017.49px;top:706.19px;font-size:13.6px;line-height:13.6px;color:#fff;-webkit-text-stroke:0.2px #fff;">50</span>
<div class="b" style="left:1100.8px;top:612px;width:113px;height:40px;background:#9897a4;border:1.2px solid #f6f6f6;box-shadow:inset 0 0 0 1px rgba(255,255,255,.18);"></div>
<div class="b" style="left:1100.8px;top:662px;width:113px;height:40px;background:#999999;border:1.2px solid #f6f6f6;box-shadow:inset 0 0 0 1px rgba(255,255,255,.18);"></div>
<span class="t" style="left:1149.79px;top:706.19px;font-size:13.6px;line-height:13.6px;color:#fff;-webkit-text-stroke:0.2px #fff;">60</span>
<div class="b" style="left:1233.1px;top:612px;width:113px;height:40px;background:#b1b0c1;border:1.2px solid #f6f6f6;box-shadow:inset 0 0 0 1px rgba(255,255,255,.18);"></div>
<div class="b" style="left:1233.1px;top:662px;width:113px;height:40px;background:#b3b3b3;border:1.2px solid #f6f6f6;box-shadow:inset 0 0 0 1px rgba(255,255,255,.18);"></div>
<span class="t" style="left:1282.09px;top:706.19px;font-size:13.6px;line-height:13.6px;color:#fff;-webkit-text-stroke:0.2px #fff;">70</span>
<div class="b" style="left:1365.4px;top:612px;width:113px;height:40px;background:#c9ccdc;border:1.2px solid #f6f6f6;box-shadow:inset 0 0 0 1px rgba(255,255,255,.18);"></div>
<div class="b" style="left:1365.4px;top:662px;width:113px;height:40px;background:#cccccc;border:1.2px solid #f6f6f6;box-shadow:inset 0 0 0 1px rgba(255,255,255,.18);"></div>
<span class="t" style="left:1414.39px;top:706.19px;font-size:13.6px;line-height:13.6px;color:#fff;-webkit-text-stroke:0.2px #fff;">80</span>
<div class="b" style="left:1497.7px;top:612px;width:113px;height:40px;background:#dbe4f6;border:1.2px solid #f6f6f6;box-shadow:inset 0 0 0 1px rgba(255,255,255,.18);"></div>
<div class="b" style="left:1497.7px;top:662px;width:113px;height:40px;background:#e6e6e6;border:1.2px solid #f6f6f6;box-shadow:inset 0 0 0 1px rgba(255,255,255,.18);"></div>
<span class="t" style="left:1546.69px;top:706.19px;font-size:13.6px;line-height:13.6px;color:#fff;-webkit-text-stroke:0.2px #fff;">90</span>
<div class="b" style="left:1630.0px;top:612px;width:113px;height:40px;background:#d7e9fd;border:1.2px solid #f6f6f6;box-shadow:inset 0 0 0 1px rgba(255,255,255,.18);"></div>
<div class="b" style="left:1630.0px;top:662px;width:113px;height:40px;background:#e8e8e8;border:1.2px solid #f6f6f6;box-shadow:inset 0 0 0 1px rgba(255,255,255,.18);"></div>
<span class="t" style="left:1675.24px;top:706.19px;font-size:13.6px;line-height:13.6px;color:#fff;-webkit-text-stroke:0.2px #fff;">100</span>
<span class="t" style="left:274.39px;top:625.35px;font-size:13.3px;line-height:13.3px;color:#fff;transform-origin:50% 50%;transform:rotate(-90deg);">Actual</span>
<span class="t" style="left:274.39px;top:675.35px;font-size:13.3px;line-height:13.3px;color:#fff;transform-origin:50% 50%;transform:rotate(-90deg);">Target</span>
<span class="t" style="left:17.90px;top:749.56px;font-size:31px;line-height:31px;color:#ececec;transform:scaleX(1.1101);">Current</span>
<span class="t" style="left:146.60px;top:749.56px;font-size:31px;line-height:31px;color:#ececec;transform:scaleX(1.0511);">Reading</span>
<span class="t" style="left:17.90px;top:799.69px;font-size:26px;line-height:26px;color:#ececec;transform:scaleX(0.9235);">x:</span>
<span class="t" style="left:46.90px;top:799.69px;font-size:26px;line-height:26px;color:#ececec;transform:scaleX(1.0956);">0,2891</span>
<span class="t" style="left:17.90px;top:843.99px;font-size:26px;line-height:26px;color:#ececec;transform:scaleX(0.9827);">y:</span>
<span class="t" style="left:47.30px;top:843.99px;font-size:26px;line-height:26px;color:#ececec;transform:scaleX(1.1031);">0,3091</span>
<span class="t" style="left:17.90px;top:888.49px;font-size:26px;line-height:26px;color:#ececec;">fL:</span>
<span class="t" style="left:56.80px;top:888.49px;font-size:26px;line-height:26px;color:#ececec;transform:scaleX(1.0943);">98,951</span>
<span class="t" style="left:17.90px;top:932.79px;font-size:26px;line-height:26px;color:#ececec;transform:scaleX(1.1626);">cd/m²:</span>
<span class="t" style="left:112.20px;top:932.79px;font-size:26px;line-height:26px;color:#ececec;transform:scaleX(1.1011);">339,031</span>
<div class="b" style="left:377px;top:741px;width:336.3px;height:234px;border:8px solid #000;border-bottom-width:4.4px;background:#333;"></div>
<div class="b" style="left:427px;top:751px;width:274.6px;height:188.5px;overflow:hidden;"><div style="height:4px;background:linear-gradient(90deg,#78ffc8 0.0%,#84ffc7 8.3%,#91ffc7 16.7%,#9fffc6 25.0%,#acffc5 33.3%,#baffc5 41.7%,#c9ffc4 50.0%,#d7ffc3 58.3%,#e6ffc2 66.7%,#f6ffc2 75.0%,#fff8bc 83.3%,#ffeab0 91.7%,#ffdda5 100.0%);"></div><div style="height:4px;background:linear-gradient(90deg,#79ffca 0.0%,#86ffc9 8.3%,#93ffc9 16.7%,#a0ffc8 25.0%,#aeffc8 33.3%,#bcffc7 41.7%,#cbffc6 50.0%,#d9ffc5 58.3%,#e9ffc5 66.7%,#f8ffc4 75.0%,#fff6bc 83.3%,#ffe8b1 91.7%,#ffdba6 100.0%);"></div><div style="height:4px;background:linear-gradient(90deg,#7bffcc 0.0%,#88ffcc 8.3%,#95ffcb 16.7%,#a2ffca 25.0%,#b0ffca 33.3%,#beffc9 41.7%,#cdffc8 50.0%,#dcffc8 58.3%,#ebffc7 66.7%,#fbffc6 75.0%,#fff4bd 83.3%,#ffe5b1 91.7%,#ffd8a6 100.0%);"></div><div style="height:4px;background:linear-gradient(90deg,#7cffce 0.0%,#89ffce 8.3%,#96ffcd 16.7%,#a4ffcd 25.0%,#b2ffcc 33.3%,#c0ffcb 41.7%,#cfffcb 50.0%,#deffca 58.3%,#edffc9 66.7%,#fdffc9 75.0%,#fff1bd 83.3%,#ffe3b2 91.7%,#ffd6a7 100.0%);"></div><div style="height:4px;background:linear-gradient(90deg,#7effd0 0.0%,#8bffd0 8.3%,#98ffcf 16.7%,#a6ffcf 25.0%,#b4ffce 33.3%,#c2ffce 41.7%,#d1ffcd 50.0%,#e0ffcc 58.3%,#f0ffcc 66.7%,#fffeca 75.0%,#ffefbe 83.3%,#ffe1b2 91.7%,#ffd4a7 100.0%);"></div><div style="height:4px;background:linear-gradient(90deg,#7fffd3 0.0%,#8cffd2 8.3%,#9affd2 16.7%,#a8ffd1 25.0%,#b6ffd0 33.3%,#c4ffd0 41.7%,#d3ffcf 50.0%,#e2ffcf 58.3%,#f2ffce 66.7%,#fffccb 75.0%,#ffedbe 83.3%,#ffdfb2 91.7%,#ffd2a8 100.0%);"></div><div style="height:4px;background:linear-gradient(90deg,#81ffd5 0.0%,#8effd4 8.3%,#9cffd4 16.7%,#aaffd3 25.0%,#b8ffd3 33.3%,#c6ffd2 41.7%,#d5ffd2 50.0%,#e5ffd1 58.3%,#f5ffd0 66.7%,#fff9cb 75.0%,#ffeabe 83.3%,#ffddb3 91.7%,#ffd0a8 100.0%);"></div><div style="height:4px;background:linear-gradient(90deg,#82ffd7 0.0%,#90ffd7 8.3%,#9dffd6 16.7%,#abffd6 25.0%,#baffd5 33.3%,#c8ffd5 41.7%,#d8ffd4 50.0%,#e7ffd3 58.3%,#f7ffd3 66.7%,#fff7cc 75.0%,#ffe8bf 83.3%,#ffdbb3 91.7%,#ffcea9 100.0%);"></div><div style="height:4px;background:linear-gradient(90deg,#84ffd9 0.0%,#91ffd9 8.3%,#9fffd8 16.7%,#adffd8 25.0%,#bcffd7 33.3%,#cbffd7 41.7%,#daffd6 50.0%,#e9ffd6 58.3%,#faffd5 66.7%,#fff4cc 75.0%,#ffe6bf 83.3%,#ffd8b4 91.7%,#ffcca9 100.0%);"></div><div style="height:4px;background:linear-gradient(90deg,#86ffdc 0.0%,#93ffdb 8.3%,#a1ffdb 16.7%,#afffda 25.0%,#beffda 33.3%,#cdffd9 41.7%,#dcffd9 50.0%,#ecffd8 58.3%,#fcffd8 66.7%,#fff2cc 75.0%,#ffe3c0 83.3%,#ffd6b4 91.7%,#ffcaa9 100.0%);"></div><div style="height:4px;background:linear-gradient(90deg,#87ffde 0.0%,#95ffdd 8.3%,#a3ffdd 16.7%,#b1ffdd 25.0%,#c0ffdc 33.3%,#cfffdc 41.7%,#deffdb 50.0%,#eeffdb 58.3%,#ffffda 66.7%,#fff0cd 75.0%,#ffe1c0 83.3%,#ffd4b4 91.7%,#ffc8aa 100.0%);"></div><div style="height:4px;background:linear-gradient(90deg,#89ffe0 0.0%,#97ffe0 8.3%,#a5ffdf 16.7%,#b3ffdf 25.0%,#c2ffdf 33.3%,#d1ffde 41.7%,#e1ffde 50.0%,#f1ffdd 58.3%,#fffddb 66.7%,#ffedcd 75.0%,#ffdfc0 83.3%,#ffd2b5 91.7%,#ffc6aa 100.0%);"></div><div style="height:4px;background:linear-gradient(90deg,#8bffe3 0.0%,#98ffe2 8.3%,#a7ffe2 16.7%,#b5ffe1 25.0%,#c4ffe1 33.3%,#d3ffe1 41.7%,#e3ffe0 50.0%,#f3ffe0 58.3%,#fffadb 66.7%,#ffebcd 75.0%,#ffddc1 83.3%,#ffd0b5 91.7%,#ffc4ab 100.0%);"></div><div style="height:4px;background:linear-gradient(90deg,#8cffe5 0.0%,#9affe5 8.3%,#a8ffe4 16.7%,#b7ffe4 25.0%,#c6ffe4 33.3%,#d6ffe3 41.7%,#e5ffe3 50.0%,#f6ffe3 58.3%,#fff8dc 66.7%,#ffe8ce 75.0%,#ffdbc1 83.3%,#ffceb6 91.7%,#ffc2ab 100.0%);"></div><div style="height:4px;background:linear-gradient(90deg,#8effe7 0.0%,#9cffe7 8.3%,#aaffe7 16.7%,#b9ffe6 25.0%,#c8ffe6 33.3%,#d8ffe6 41.7%,#e8ffe6 50.0%,#f8ffe5 58.3%,#fff5dc 66.7%,#ffe6ce 75.0%,#ffd8c2 83.3%,#ffccb6 91.7%,#ffc0ac 100.0%);"></div><div style="height:4px;background:linear-gradient(90deg,#90ffea 0.0%,#9effe9 8.3%,#acffe9 16.7%,#bbffe9 25.0%,#caffe9 33.3%,#daffe8 41.7%,#eaffe8 50.0%,#fbffe8 58.3%,#fff3dc 66.7%,#ffe4cf 75.0%,#ffd6c2 83.3%,#ffcab6 91.7%,#ffbeac 100.0%);"></div><div style="height:4px;background:linear-gradient(90deg,#91ffec 0.0%,#a0ffec 8.3%,#aeffec 16.7%,#bdffec 25.0%,#cdffeb 33.3%,#ddffeb 41.7%,#edffeb 50.0%,#feffeb 58.3%,#fff0dd 66.7%,#ffe1cf 75.0%,#ffd4c2 83.3%,#ffc8b7 91.7%,#ffbdac 100.0%);"></div><div style="height:4px;background:linear-gradient(90deg,#93ffef 0.0%,#a1ffef 8.3%,#b0ffee 16.7%,#bfffee 25.0%,#cfffee 33.3%,#dfffee 41.7%,#efffee 50.0%,#fffeec 58.3%,#ffeedd 66.7%,#ffdfcf 75.0%,#ffd2c3 83.3%,#ffc6b7 91.7%,#ffbbad 100.0%);"></div><div style="height:4px;background:linear-gradient(90deg,#95fff1 0.0%,#a3fff1 8.3%,#b2fff1 16.7%,#c1fff1 25.0%,#d1fff1 33.3%,#e1fff0 41.7%,#f2fff0 50.0%,#fffbec 58.3%,#ffebdd 66.7%,#ffddd0 75.0%,#ffd0c3 83.3%,#ffc4b8 91.7%,#ffb9ad 100.0%);"></div><div style="height:4px;background:linear-gradient(90deg,#97fff4 0.0%,#a5fff4 8.3%,#b4fff4 16.7%,#c4fff3 25.0%,#d3fff3 33.3%,#e4fff3 41.7%,#f4fff3 50.0%,#fff9ed 58.3%,#ffe9de 66.7%,#ffdbd0 75.0%,#ffcec3 83.3%,#ffc2b8 91.7%,#ffb7ae 100.0%);"></div><div style="height:4px;background:linear-gradient(90deg,#99fff6 0.0%,#a7fff6 8.3%,#b6fff6 16.7%,#c6fff6 25.0%,#d6fff6 33.3%,#e6fff6 41.7%,#f7fff6 50.0%,#fff6ed 58.3%,#ffe6de 66.7%,#ffd8d0 75.0%,#ffcbc4 83.3%,#ffc0b8 91.7%,#ffb5ae 100.0%);"></div><div style="height:4px;background:linear-gradient(90deg,#9afff9 0.0%,#a9fff9 8.3%,#b8fff9 16.7%,#c8fff9 25.0%,#d8fff9 33.3%,#e9fff9 41.7%,#fafff9 50.0%,#fff3ed 58.3%,#ffe4de 66.7%,#ffd6d1 75.0%,#ffc9c4 83.3%,#ffbeb9 91.7%,#ffb3ae 100.0%);"></div><div style="height:4px;background:linear-gradient(90deg,#9cfffc 0.0%,#abfffc 8.3%,#bbfffc 16.7%,#cafffc 25.0%,#dbfffc 33.3%,#ebfffc 41.7%,#fcfffc 50.0%,#fff1ee 58.3%,#ffe2df 66.7%,#ffd4d1 75.0%,#ffc7c5 83.3%,#ffbcb9 91.7%,#ffb1af 100.0%);"></div><div style="height:4px;background:linear-gradient(90deg,#9efffe 0.0%,#adfffe 8.3%,#bdfffe 16.7%,#cdfffe 25.0%,#ddfffe 33.3%,#eeffff 41.7%,#fffffe 50.0%,#ffeeee 58.3%,#ffdfdf 66.7%,#ffd2d1 75.0%,#ffc5c5 83.3%,#ffbaba 91.7%,#ffafaf 100.0%);"></div><div style="height:4px;background:linear-gradient(90deg,#9ffdff 0.0%,#aefdff 8.3%,#bdfdff 16.7%,#cdfdff 25.0%,#ddfdff 33.3%,#eefdff 41.7%,#fffcff 50.0%,#ffecee 58.3%,#ffdddf 66.7%,#ffcfd2 75.0%,#ffc3c5 83.3%,#ffb8ba 91.7%,#ffaeb0 100.0%);"></div><div style="height:4px;background:linear-gradient(90deg,#9ffaff 0.0%,#aefaff 8.3%,#bdfaff 16.7%,#cdfaff 25.0%,#ddfaff 33.3%,#eefaff 41.7%,#fff9ff 50.0%,#ffe9ee 58.3%,#ffdbdf 66.7%,#ffcdd2 75.0%,#ffc1c6 83.3%,#ffb6ba 91.7%,#ffacb0 100.0%);"></div><div style="height:4px;background:linear-gradient(90deg,#9ff8ff 0.0%,#aef7ff 8.3%,#bdf7ff 16.7%,#cdf7ff 25.0%,#ddf7ff 33.3%,#eef7ff 41.7%,#fff7ff 50.0%,#ffe7ef 58.3%,#ffd8e0 66.7%,#ffcbd2 75.0%,#ffbfc6 83.3%,#ffb4bb 91.7%,#ffaab0 100.0%);"></div><div style="height:4px;background:linear-gradient(90deg,#9ff5ff 0.0%,#aef5ff 8.3%,#bdf5ff 16.7%,#cdf4ff 25.0%,#ddf4ff 33.3%,#eef4ff 41.7%,#fff4ff 50.0%,#ffe4ef 58.3%,#ffd6e0 66.7%,#ffc9d3 75.0%,#ffbdc6 83.3%,#ffb2bb 91.7%,#ffa8b1 100.0%);"></div><div style="height:4px;background:linear-gradient(90deg,#a0f2ff 0.0%,#aef2ff 8.3%,#bef2ff 16.7%,#cdf2ff 25.0%,#ddf1ff 33.3%,#eef1ff 41.7%,#fff1ff 50.0%,#ffe2ef 58.3%,#ffd4e0 66.7%,#ffc7d3 75.0%,#ffbbc7 83.3%,#ffb0bb 91.7%,#ffa6b1 100.0%);"></div><div style="height:4px;background:linear-gradient(90deg,#a0f0ff 0.0%,#afefff 8.3%,#beefff 16.7%,#cdefff 25.0%,#ddefff 33.3%,#edeeff 41.7%,#feeeff 50.0%,#ffdfef 58.3%,#ffd1e1 66.7%,#ffc5d3 75.0%,#ffb9c7 83.3%,#ffaebc 91.7%,#ffa5b2 100.0%);"></div><div style="height:4px;background:linear-gradient(90deg,#a0edff 0.0%,#afedff 8.3%,#beedff 16.7%,#cdecff 25.0%,#ddecff 33.3%,#edecff 41.7%,#feebff 50.0%,#ffddf0 58.3%,#ffcfe1 66.7%,#ffc3d4 75.0%,#ffb7c7 83.3%,#ffacbc 91.7%,#ffa3b2 100.0%);"></div><div style="height:4px;background:linear-gradient(90deg,#a0ebff 0.0%,#afeaff 8.3%,#beeaff 16.7%,#cdeaff 25.0%,#dde9ff 33.3%,#ede9ff 41.7%,#fee9ff 50.0%,#ffdbf0 58.3%,#ffcde1 66.7%,#ffc0d4 75.0%,#ffb5c8 83.3%,#ffabbd 91.7%,#ffa1b2 100.0%);"></div><div style="height:4px;background:linear-gradient(90deg,#a0e8ff 0.0%,#afe8ff 8.3%,#bee7ff 16.7%,#cde7ff 25.0%,#dde7ff 33.3%,#ede6ff 41.7%,#fee6ff 50.0%,#ffd8f0 58.3%,#ffcbe2 66.7%,#ffbed4 75.0%,#ffb3c8 83.3%,#ffa9bd 91.7%,#ff9fb3 100.0%);"></div><div style="height:4px;background:linear-gradient(90deg,#a1e6ff 0.0%,#afe5ff 8.3%,#bee5ff 16.7%,#cde4ff 25.0%,#dde4ff 33.3%,#ede4ff 41.7%,#fee3ff 50.0%,#ffd6f0 58.3%,#ffc8e2 66.7%,#ffbcd5 75.0%,#ffb1c8 83.3%,#ffa7bd 91.7%,#ff9eb3 100.0%);"></div><div style="height:4px;background:linear-gradient(90deg,#a1e3ff 0.0%,#afe3ff 8.3%,#bee2ff 16.7%,#cde2ff 25.0%,#dde1ff 33.3%,#ede1ff 41.7%,#fde1ff 50.0%,#ffd3f1 58.3%,#ffc6e2 66.7%,#ffbad5 75.0%,#ffafc9 83.3%,#ffa5be 91.7%,#ff9cb3 100.0%);"></div><div style="height:4px;background:linear-gradient(90deg,#a1e1ff 0.0%,#afe0ff 8.3%,#bee0ff 16.7%,#cddfff 25.0%,#dddfff 33.3%,#eddeff 41.7%,#fddeff 50.0%,#ffd1f1 58.3%,#ffc4e2 66.7%,#ffb8d5 75.0%,#ffadc9 83.3%,#ffa3be 91.7%,#ff9ab4 100.0%);"></div><div style="height:4px;background:linear-gradient(90deg,#a1deff 0.0%,#b0deff 8.3%,#beddff 16.7%,#cdddff 25.0%,#dddcff 33.3%,#eddcff 41.7%,#fddbff 50.0%,#ffcff1 58.3%,#ffc2e3 66.7%,#ffb6d5 75.0%,#ffabc9 83.3%,#ffa2be 91.7%,#ff98b4 100.0%);"></div><div style="height:4px;background:linear-gradient(90deg,#a2dcff 0.0%,#b0dbff 8.3%,#bedbff 16.7%,#cddaff 25.0%,#dddaff 33.3%,#edd9ff 41.7%,#fdd9ff 50.0%,#ffccf1 58.3%,#ffc0e3 66.7%,#ffb4d6 75.0%,#ffa9ca 83.3%,#ffa0bf 91.7%,#ff97b4 100.0%);"></div><div style="height:4px;background:linear-gradient(90deg,#a2d9ff 0.0%,#b0d9ff 8.3%,#bed8ff 16.7%,#cdd8ff 25.0%,#ddd7ff 33.3%,#ecd7ff 41.7%,#fdd6ff 50.0%,#ffcaf2 58.3%,#ffbee3 66.7%,#ffb2d6 75.0%,#ffa8ca 83.3%,#ff9ebf 91.7%,#ff95b5 100.0%);"></div><div style="height:4px;background:linear-gradient(90deg,#a2d7ff 0.0%,#b0d6ff 8.3%,#bfd6ff 16.7%,#cdd5ff 25.0%,#ddd5ff 33.3%,#ecd4ff 41.7%,#fcd3ff 50.0%,#ffc8f2 58.3%,#ffbbe3 66.7%,#ffb0d6 75.0%,#ffa6ca 83.3%,#ff9cbf 91.7%,#ff93b5 100.0%);"></div><div style="height:4px;background:linear-gradient(90deg,#a2d4ff 0.0%,#b0d4ff 8.3%,#bfd3ff 16.7%,#cdd3ff 25.0%,#ddd2ff 33.3%,#ecd2ff 41.7%,#fcd1ff 50.0%,#ffc6f2 58.3%,#ffb9e4 66.7%,#ffaed7 75.0%,#ffa4cb 83.3%,#ff9ac0 91.7%,#ff92b6 100.0%);"></div><div style="height:4px;background:linear-gradient(90deg,#a2d2ff 0.0%,#b0d2ff 8.3%,#bfd1ff 16.7%,#cdd0ff 25.0%,#ddd0ff 33.3%,#eccfff 41.7%,#fcceff 50.0%,#ffc3f2 58.3%,#ffb7e4 66.7%,#ffacd7 75.0%,#ffa2cb 83.3%,#ff99c0 91.7%,#ff90b6 100.0%);"></div><div style="height:4px;background:linear-gradient(90deg,#a2d0ff 0.0%,#b0cfff 8.3%,#bfcfff 16.7%,#cdceff 25.0%,#dccdff 33.3%,#eccdff 41.7%,#fcccff 50.0%,#ffc1f3 58.3%,#ffb5e4 66.7%,#ffaad7 75.0%,#ffa0cb 83.3%,#ff97c0 91.7%,#ff8eb6 100.0%);"></div><div style="height:4px;background:linear-gradient(90deg,#a3cdff 0.0%,#b1cdff 8.3%,#bfccff 16.7%,#cdccff 25.0%,#dccbff 33.3%,#eccaff 41.7%,#fcc9ff 50.0%,#ffbff3 58.3%,#ffb3e5 66.7%,#ffa8d8 75.0%,#ff9ecc 83.3%,#ff95c1 91.7%,#ff8db7 100.0%);"></div><div style="height:4px;background:linear-gradient(90deg,#a3cbff 0.0%,#b1cbff 8.3%,#bfcaff 16.7%,#cdc9ff 25.0%,#dcc8ff 33.3%,#ecc8ff 41.7%,#fbc7ff 50.0%,#ffbdf3 58.3%,#ffb1e5 66.7%,#ffa6d8 75.0%,#ff9ccc 83.3%,#ff93c1 91.7%,#ff8bb7 100.0%);"></div><div style="height:4px;background:linear-gradient(90deg,#a3c9ff 0.0%,#b1c8ff 8.3%,#bfc8ff 16.7%,#cdc7ff 25.0%,#dcc6ff 33.3%,#ecc5ff 41.7%,#fbc4ff 50.0%,#ffbbf3 58.3%,#ffafe5 66.7%,#ffa4d8 75.0%,#ff9bcc 83.3%,#ff92c1 91.7%,#ff89b7 100.0%);"></div><div style="height:4px;background:linear-gradient(90deg,#a3c7ff 0.0%,#b1c6ff 8.3%,#bfc5ff 16.7%,#cdc4ff 25.0%,#dcc4ff 33.3%,#ecc3ff 41.7%,#fbc2ff 50.0%,#ffb8f3 58.3%,#ffade5 66.7%,#ffa2d8 75.0%,#ff99cd 83.3%,#ff90c2 91.7%,#ff88b8 100.0%);"></div><div style="height:0.5px;background:linear-gradient(90deg,#a3c4ff 0.0%,#b1c4ff 8.3%,#bfc3ff 16.7%,#cec2ff 25.0%,#dcc1ff 33.3%,#ebc0ff 41.7%,#fbc0ff 50.0%,#ffb6f4 58.3%,#ffabe6 66.7%,#ffa1d9 75.0%,#ff97cd 83.3%,#ff8ec2 91.7%,#ff86b8 100.0%);"></div></div>
<div class="b" style="left:426.5px;top:750.5px;width:275.6px;height:189.5px;border:1.6px solid #8a8a8a;"></div>
<svg width="1920" height="1048">
<clipPath id="ccie"><rect x="428" y="752" width="273.1" height="187.0"/></clipPath>
<polyline clip-path="url(#ccie)" points="406.9,980.4 411.9,976.4 417.0,972.4 422.0,968.4 427.0,964.4 432.0,960.5 437.1,956.6 442.1,952.7 447.1,948.8 452.2,945.0 457.2,941.1 462.2,937.3 467.3,933.6 472.3,929.8 477.3,926.1 482.3,922.3 487.4,918.7 492.4,915.0 497.4,911.3 502.5,907.7 507.5,904.1 512.5,900.5 517.5,897.0 522.6,893.4 527.6,889.9 532.6,886.4 537.7,883.0 542.7,879.5 547.7,876.1 552.8,872.7 557.8,869.3 562.8,866.0 567.8,862.6 572.9,859.3 577.9,856.0 582.9,852.7 588.0,849.5 593.0,846.2 598.0,843.0 603.1,839.8 608.1,836.7 613.1,833.5 618.1,830.4 623.2,827.3 628.2,824.2 633.2,821.1 638.3,818.1 643.3,815.0 648.3,812.0 653.3,809.0 658.4,806.1 663.4,803.1 668.4,800.2 673.5,797.3 678.5,794.4 683.5,791.5 688.6,788.7 693.6,785.8 698.6,783.0 703.6,780.2 708.7,777.5" fill="none" stroke="#000" stroke-width="3"/>
<rect x="555.4" y="837.9" width="16.2" height="15.2" fill="#fff" stroke="#000" stroke-width="2"/>
<ellipse cx="635.9" cy="899.8" rx="5.6" ry="5.1" fill="#1a1a1a" stroke="#000" stroke-width="1.1"/>
<ellipse cx="539.1" cy="885.6" rx="5.6" ry="5.1" fill="#333333" stroke="#000" stroke-width="1.1"/>
<ellipse cx="522.3" cy="863.5" rx="5.6" ry="5.1" fill="#4c4c4c" stroke="#000" stroke-width="1.1"/>
<ellipse cx="513.2" cy="884.3" rx="5.6" ry="5.1" fill="#666666" stroke="#000" stroke-width="1.1"/>
<ellipse cx="500.8" cy="922.9" rx="5.6" ry="5.1" fill="#7f7f7f" stroke="#000" stroke-width="1.1"/>
<ellipse cx="497.9" cy="918.0" rx="5.6" ry="5.1" fill="#999999" stroke="#000" stroke-width="1.1"/>
<ellipse cx="493.1" cy="923.5" rx="5.6" ry="5.1" fill="#b2b2b2" stroke="#000" stroke-width="1.1"/>
<ellipse cx="491.7" cy="911.9" rx="5.6" ry="5.1" fill="#cccccc" stroke="#000" stroke-width="1.1"/>
<ellipse cx="478.7" cy="907.3" rx="5.6" ry="5.1" fill="#e5e5e5" stroke="#000" stroke-width="1.1"/>
<ellipse cx="450.5" cy="910.2" rx="5.6" ry="5.1" fill="#ffffff" stroke="#000" stroke-width="1.1"/>
<path d="M421 809.9h6" stroke="#ddd" stroke-width="1.5"/>
<path d="M421 874.8h6" stroke="#ddd" stroke-width="1.5"/>
<path d="M502.7 940v6" stroke="#ccc" stroke-width="1.5"/>
<path d="M598.5 940v6" stroke="#ccc" stroke-width="1.5"/>
<path d="M694.3 940v6" stroke="#ccc" stroke-width="1.5"/>
</svg>
<span class="t" style="left:388.00px;top:803.10px;font-size:15px;line-height:15px;color:#dedede;transform:scaleX(1.1111);">0,34</span>
<span class="t" style="left:388.00px;top:868.10px;font-size:15px;line-height:15px;color:#dedede;transform:scaleX(1.1111);">0,32</span>
<span class="t" style="left:491.50px;top:950.30px;font-size:15px;line-height:15px;color:#dedede;transform:scaleX(1.1084);">0,3</span>
<span class="t" style="left:582.00px;top:950.30px;font-size:15px;line-height:15px;color:#dedede;transform:scaleX(1.1282);">0,32</span>
<span class="t" style="left:677.50px;top:950.30px;font-size:15px;line-height:15px;color:#dedede;transform:scaleX(1.1282);">0,34</span>
<div class="b" style="left:715px;top:742px;width:16px;height:30.7px;background:#000;"></div>
<div class="b" style="left:731px;top:742px;width:1160px;height:30.7px;background:linear-gradient(180deg,#313131 0%,#2d2d2d 52%,#161616 53%,#0e0e0e 100%);"></div>
<span class="t" style="left:885.30px;top:750.03px;font-size:16.5px;line-height:16.5px;color:#fff;-webkit-text-stroke:0.25px #fff;">0</span>
<span class="t" style="left:991.60px;top:750.03px;font-size:16.5px;line-height:16.5px;color:#fff;-webkit-text-stroke:0.25px #fff;">10</span>
<span class="t" style="left:1087.50px;top:750.03px;font-size:16.5px;line-height:16.5px;color:#fff;-webkit-text-stroke:0.25px #fff;">20</span>
<span class="t" style="left:1183.70px;top:750.03px;font-size:16.5px;line-height:16.5px;color:#fff;-webkit-text-stroke:0.25px #fff;">30</span>
<span class="t" style="left:1279.70px;top:750.03px;font-size:16.5px;line-height:16.5px;color:#fff;-webkit-text-stroke:0.25px #fff;">40</span>
<span class="t" style="left:1375.90px;top:750.03px;font-size:16.5px;line-height:16.5px;color:#fff;-webkit-text-stroke:0.25px #fff;">50</span>
<span class="t" style="left:1471.90px;top:750.03px;font-size:16.5px;line-height:16.5px;color:#fff;-webkit-text-stroke:0.25px #fff;">60</span>
<span class="t" style="left:1567.90px;top:750.03px;font-size:16.5px;line-height:16.5px;color:#fff;-webkit-text-stroke:0.25px #fff;">70</span>
<span class="t" style="left:1664.00px;top:750.03px;font-size:16.5px;line-height:16.5px;color:#fff;-webkit-text-stroke:0.25px #fff;">80</span>
<span class="t" style="left:1760.00px;top:750.03px;font-size:16.5px;line-height:16.5px;color:#fff;-webkit-text-stroke:0.25px #fff;">90</span>
<span class="t" style="left:1856.30px;top:750.03px;font-size:16.5px;line-height:16.5px;color:#fff;-webkit-text-stroke:0.25px #fff;">100</span>
<div class="b" style="left:715px;top:772.5px;width:1176px;height:186.3px;overflow:hidden;"><div class="b" style="left:0;top:0.00px;width:1176px;height:28.43px;background:#444444;"></div><div class="b" style="left:0;top:0.00px;width:16px;height:28.43px;background:#2b2b2b;"></div><span class="t" style="left:20.50px;top:5.96px;font-size:18px;line-height:18px;color:#f2f2f2;transform:scaleX(0.9130);">x: CIE31</span><span class="t" style="left:170.00px;top:5.96px;font-size:18px;line-height:18px;color:#f2f2f2;">0,2905</span><span class="t" style="left:276.30px;top:5.96px;font-size:18px;line-height:18px;color:#f2f2f2;">0,3278</span><span class="t" style="left:372.20px;top:5.96px;font-size:18px;line-height:18px;color:#f2f2f2;">0,3076</span><span class="t" style="left:468.40px;top:5.96px;font-size:18px;line-height:18px;color:#f2f2f2;">0,3041</span><span class="t" style="left:564.40px;top:5.96px;font-size:18px;line-height:18px;color:#f2f2f2;">0,3022</span><span class="t" style="left:660.60px;top:5.96px;font-size:18px;line-height:18px;color:#f2f2f2;">0,2996</span><span class="t" style="left:756.60px;top:5.96px;font-size:18px;line-height:18px;color:#f2f2f2;">0,2990</span><span class="t" style="left:852.60px;top:5.96px;font-size:18px;line-height:18px;color:#f2f2f2;">0,2980</span><span class="t" style="left:948.70px;top:5.96px;font-size:18px;line-height:18px;color:#f2f2f2;">0,2977</span><span class="t" style="left:1044.70px;top:5.96px;font-size:18px;line-height:18px;color:#f2f2f2;">0,2950</span><span class="t" style="left:1141.00px;top:5.96px;font-size:18px;line-height:18px;color:#f2f2f2;">0,2891</span><div class="b" style="left:0;top:28.13px;width:1176px;height:28.43px;background:#828282;"></div><div class="b" style="left:0;top:28.13px;width:16px;height:28.43px;background:#404040;"></div><span class="t" style="left:20.50px;top:34.09px;font-size:18px;line-height:18px;color:#f0f0f0;transform:scaleX(0.9130);">y: CIE31</span><span class="t" style="left:170.00px;top:34.09px;font-size:18px;line-height:18px;color:#f0f0f0;">0,2571</span><span class="t" style="left:276.30px;top:34.09px;font-size:18px;line-height:18px;color:#f0f0f0;">0,3123</span><span class="t" style="left:372.20px;top:34.09px;font-size:18px;line-height:18px;color:#f0f0f0;">0,3167</span><span class="t" style="left:468.40px;top:34.09px;font-size:18px;line-height:18px;color:#f0f0f0;">0,3235</span><span class="t" style="left:564.40px;top:34.09px;font-size:18px;line-height:18px;color:#f0f0f0;">0,3171</span><span class="t" style="left:660.60px;top:34.09px;font-size:18px;line-height:18px;color:#f0f0f0;">0,3052</span><span class="t" style="left:756.60px;top:34.09px;font-size:18px;line-height:18px;color:#f0f0f0;">0,3067</span><span class="t" style="left:852.60px;top:34.09px;font-size:18px;line-height:18px;color:#f0f0f0;">0,3050</span><span class="t" style="left:948.70px;top:34.09px;font-size:18px;line-height:18px;color:#f0f0f0;">0,3086</span><span class="t" style="left:1044.70px;top:34.09px;font-size:18px;line-height:18px;color:#f0f0f0;">0,3100</span><span class="t" style="left:1141.00px;top:34.09px;font-size:18px;line-height:18px;color:#f0f0f0;">0,3091</span><div class="b" style="left:0;top:56.26px;width:1176px;height:28.43px;background:#444444;"></div><div class="b" style="left:0;top:56.26px;width:16px;height:28.43px;background:#2b2b2b;"></div><span class="t" style="left:20.50px;top:62.22px;font-size:18px;line-height:18px;color:#f2f2f2;">Y</span><span class="t" style="left:170.00px;top:62.22px;font-size:18px;line-height:18px;color:#f2f2f2;">0,1468</span><span class="t" style="left:276.30px;top:62.22px;font-size:18px;line-height:18px;color:#f2f2f2;">0,5008</span><span class="t" style="left:372.20px;top:62.22px;font-size:18px;line-height:18px;color:#f2f2f2;">2,2740</span><span class="t" style="left:468.40px;top:62.22px;font-size:18px;line-height:18px;color:#f2f2f2;">6,1380</span><span class="t" style="left:564.40px;top:62.22px;font-size:18px;line-height:18px;color:#f2f2f2;">11,9617</span><span class="t" style="left:660.60px;top:62.22px;font-size:18px;line-height:18px;color:#f2f2f2;">22,2243</span><span class="t" style="left:756.60px;top:62.22px;font-size:18px;line-height:18px;color:#f2f2f2;">30,7257</span><span class="t" style="left:852.60px;top:62.22px;font-size:18px;line-height:18px;color:#f2f2f2;">44,0946</span><span class="t" style="left:948.70px;top:62.22px;font-size:18px;line-height:18px;color:#f2f2f2;">59,9733</span><span class="t" style="left:1044.70px;top:62.22px;font-size:18px;line-height:18px;color:#f2f2f2;">77,0757</span><span class="t" style="left:1141.00px;top:62.22px;font-size:18px;line-height:18px;color:#f2f2f2;">98,9510</span><div class="b" style="left:0;top:84.39px;width:1176px;height:28.43px;background:#828282;"></div><div class="b" style="left:0;top:84.39px;width:16px;height:28.43px;background:#404040;"></div><span class="t" style="left:20.50px;top:90.35px;font-size:18px;line-height:18px;color:#f0f0f0;transform:scaleX(1.0262);">Target Y</span><span class="t" style="left:170.00px;top:90.35px;font-size:18px;line-height:18px;color:#f0f0f0;">0,0000</span><span class="t" style="left:276.30px;top:90.35px;font-size:18px;line-height:18px;color:#f0f0f0;">1,0221</span><span class="t" style="left:372.20px;top:90.35px;font-size:18px;line-height:18px;color:#f0f0f0;">3,2757</span><span class="t" style="left:468.40px;top:90.35px;font-size:18px;line-height:18px;color:#f0f0f0;">7,1513</span><span class="t" style="left:564.40px;top:90.35px;font-size:18px;line-height:18px;color:#f0f0f0;">13,1474</span><span class="t" style="left:660.60px;top:90.35px;font-size:18px;line-height:18px;color:#f0f0f0;">21,3595</span><span class="t" style="left:756.60px;top:90.35px;font-size:18px;line-height:18px;color:#f0f0f0;">31,5204</span><span class="t" style="left:852.60px;top:90.35px;font-size:18px;line-height:18px;color:#f0f0f0;">44,0529</span><span class="t" style="left:948.70px;top:90.35px;font-size:18px;line-height:18px;color:#f0f0f0;">59,7491</span><span class="t" style="left:1044.70px;top:90.35px;font-size:18px;line-height:18px;color:#f0f0f0;">78,2994</span><span class="t" style="left:1141.00px;top:90.35px;font-size:18px;line-height:18px;color:#f0f0f0;">98,9510</span><div class="b" style="left:0;top:112.52px;width:1176px;height:28.43px;background:#444444;"></div><div class="b" style="left:0;top:112.52px;width:16px;height:28.43px;background:#2b2b2b;"></div><span class="t" style="left:20.50px;top:118.48px;font-size:18px;line-height:18px;color:#f2f2f2;transform:scaleX(1.0299);">Gamma Log/Log</span><span class="t" style="left:170.00px;top:118.48px;font-size:18px;line-height:18px;color:#f2f2f2;">1,3704</span><span class="t" style="left:276.30px;top:118.48px;font-size:18px;line-height:18px;color:#f2f2f2;">2,3153</span><span class="t" style="left:372.20px;top:118.48px;font-size:18px;line-height:18px;color:#f2f2f2;">2,3443</span><span class="t" style="left:468.40px;top:118.48px;font-size:18px;line-height:18px;color:#f2f2f2;">2,2966</span><span class="t" style="left:564.40px;top:118.48px;font-size:18px;line-height:18px;color:#f2f2f2;">2,3059</span><span class="t" style="left:660.60px;top:118.48px;font-size:18px;line-height:18px;color:#f2f2f2;">2,1668</span><span class="t" style="left:756.60px;top:118.48px;font-size:18px;line-height:18px;color:#f2f2f2;">2,2895</span><span class="t" style="left:852.60px;top:118.48px;font-size:18px;line-height:18px;color:#f2f2f2;">2,2485</span><span class="t" style="left:948.70px;top:118.48px;font-size:18px;line-height:18px;color:#f2f2f2;">2,2439</span><span class="t" style="left:1044.70px;top:118.48px;font-size:18px;line-height:18px;color:#f2f2f2;">2,4212</span><span class="t" style="left:1141.00px;top:118.48px;font-size:18px;line-height:18px;color:#f2f2f2;">2,2744</span><div class="b" style="left:0;top:140.65px;width:1176px;height:28.43px;background:#828282;"></div><div class="b" style="left:0;top:140.65px;width:16px;height:28.43px;background:#404040;"></div><span class="t" style="left:20.50px;top:146.61px;font-size:18px;line-height:18px;color:#f0f0f0;transform:scaleX(0.8649);">CCT</span><span class="t" style="left:170.00px;top:146.61px;font-size:18px;line-height:18px;color:#f0f0f0;">10804,3114</span><span class="t" style="left:276.30px;top:146.61px;font-size:18px;line-height:18px;color:#f0f0f0;">5746,3091</span><span class="t" style="left:372.20px;top:146.61px;font-size:18px;line-height:18px;color:#f0f0f0;">6917,7970</span><span class="t" style="left:468.40px;top:146.61px;font-size:18px;line-height:18px;color:#f0f0f0;">7050,8872</span><span class="t" style="left:564.40px;top:146.61px;font-size:18px;line-height:18px;color:#f0f0f0;">7260,3243</span><span class="t" style="left:660.60px;top:146.61px;font-size:18px;line-height:18px;color:#f0f0f0;">7643,9344</span><span class="t" style="left:756.60px;top:146.61px;font-size:18px;line-height:18px;color:#f0f0f0;">7656,0896</span><span class="t" style="left:852.60px;top:146.61px;font-size:18px;line-height:18px;color:#f0f0f0;">7766,3865</span><span class="t" style="left:948.70px;top:146.61px;font-size:18px;line-height:18px;color:#f0f0f0;">7712,3613</span><span class="t" style="left:1044.70px;top:146.61px;font-size:18px;line-height:18px;color:#f0f0f0;">7881,4886</span><span class="t" style="left:1141.00px;top:146.61px;font-size:18px;line-height:18px;color:#f0f0f0;">8346,1234</span><div class="b" style="left:0;top:168.78px;width:1176px;height:28.43px;background:#444444;"></div><div class="b" style="left:0;top:168.78px;width:16px;height:28.43px;background:#2b2b2b;"></div><span class="t" style="left:20.50px;top:174.74px;font-size:18px;line-height:18px;color:#f2f2f2;transform:scaleX(0.9783);">ΔE 2000</span><span class="t" style="left:170.00px;top:174.74px;font-size:18px;line-height:18px;color:#f2f2f2;">2,2065</span><span class="t" style="left:276.30px;top:174.74px;font-size:18px;line-height:18px;color:#f2f2f2;">4,0796</span><span class="t" style="left:372.20px;top:174.74px;font-size:18px;line-height:18px;color:#f2f2f2;">3,6296</span><span class="t" style="left:468.40px;top:174.74px;font-size:18px;line-height:18px;color:#f2f2f2;">2,5783</span><span class="t" style="left:564.40px;top:174.74px;font-size:18px;line-height:18px;color:#f2f2f2;">3,4915</span><span class="t" style="left:660.60px;top:174.74px;font-size:18px;line-height:18px;color:#f2f2f2;">7,3534</span><span class="t" style="left:756.60px;top:174.74px;font-size:18px;line-height:18px;color:#f2f2f2;">7,3903</span><span class="t" style="left:852.60px;top:174.74px;font-size:18px;line-height:18px;color:#f2f2f2;">8,6748</span><span class="t" style="left:948.70px;top:174.74px;font-size:18px;line-height:18px;color:#f2f2f2;">7,9624</span><span class="t" style="left:1044.70px;top:174.74px;font-size:18px;line-height:18px;color:#f2f2f2;">8,1062</span><span class="t" style="left:1141.00px;top:174.74px;font-size:18px;line-height:18px;color:#f2f2f2;">9,9300</span></div>
<div class="b" style="left:1891.2px;top:772.7px;width:18.7px;height:186px;background:#5b5b5b;border-radius:4px 4px 4px 0;"></div>
<div class="b" style="left:731px;top:959.1px;width:1160px;height:17.7px;background:#5b5b5b;border-radius:0 0 4px 4px;"></div>
<div class="b" style="left:1892.3px;top:773.8px;width:16px;height:15.2px;background:#6c6c6c;border-radius:3.5px;border:1px solid #828282;"></div>
<div class="b" style="left:1892.3px;top:942px;width:16px;height:15px;background:#6c6c6c;border-radius:3.5px;border:1px solid #828282;"></div>
<div class="b" style="left:1893px;top:792.5px;width:15.6px;height:126px;background:#444;border-radius:7.8px;"></div>
<div class="b" style="left:732px;top:960.4px;width:16px;height:14.4px;background:#6c6c6c;border-radius:3.5px;border:1px solid #828282;"></div>
<div class="b" style="left:1874px;top:960.4px;width:15.2px;height:14.4px;background:#6c6c6c;border-radius:3.5px;border:1px solid #828282;"></div>
<div class="b" style="left:751px;top:960.8px;width:1068.5px;height:14.8px;background:#444;border-radius:7.4px;"></div>
<svg width="1920" height="1048"><path d="M1895.6 784.8h9.4l-4.7-5.8zM1895.6 946.3h9.4l-4.7 5.8zM743.6 962.8v9.6l-6.4-4.8zM1878.6 962.8v9.6l6.4-4.8z" fill="#383838"/></svg>
<div class="b" style="left:0px;top:977.5px;width:1920px;height:63px;background:#3a3a3a;"></div>
<div class="b" style="left:0.8px;top:978px;width:143.4px;height:61.3px;background:linear-gradient(180deg,#a6a6a6 0%,#939393 8%,#7a7a7a 50%,#5d5d5d 100%);border-radius:5px;"></div>
<div class="b" style="left:5.2px;top:982.2px;width:134.8px;height:37.8px;background:#000000;border-radius:4.5px;border:1px solid #a6a6a6;border-top-color:#8a8a8a;box-shadow:0 0 1.5px rgba(40,40,40,.5);"></div>
<span class="t" style="left:69.46px;top:1024.91px;font-size:10.5px;line-height:10.5px;color:#3c3c3c;font-weight:bold;transform:scaleX(1.0400);">0</span>
<div class="b" style="left:145.8px;top:978px;width:143.4px;height:61.3px;background:linear-gradient(180deg,#a6a6a6 0%,#939393 8%,#7a7a7a 50%,#5d5d5d 100%);border-radius:5px;"></div>
<div class="b" style="left:150.20000000000002px;top:982.2px;width:134.8px;height:37.8px;background:#1a1a1a;border-radius:4.5px;border:1px solid #a6a6a6;border-top-color:#8a8a8a;box-shadow:0 0 1.5px rgba(40,40,40,.5);"></div>
<span class="t" style="left:211.43px;top:1024.91px;font-size:10.5px;line-height:10.5px;color:#3c3c3c;font-weight:bold;transform:scaleX(1.0400);">10</span>
<div class="b" style="left:290.8px;top:978px;width:143.4px;height:61.3px;background:linear-gradient(180deg,#a6a6a6 0%,#939393 8%,#7a7a7a 50%,#5d5d5d 100%);border-radius:5px;"></div>
<div class="b" style="left:295.2px;top:982.2px;width:134.8px;height:37.8px;background:#333333;border-radius:4.5px;border:1px solid #a6a6a6;border-top-color:#8a8a8a;box-shadow:0 0 1.5px rgba(40,40,40,.5);"></div>
<span class="t" style="left:356.43px;top:1024.91px;font-size:10.5px;line-height:10.5px;color:#3c3c3c;font-weight:bold;transform:scaleX(1.0400);">20</span>
<div class="b" style="left:435.8px;top:978px;width:143.4px;height:61.3px;background:linear-gradient(180deg,#a6a6a6 0%,#939393 8%,#7a7a7a 50%,#5d5d5d 100%);border-radius:5px;"></div>
<div class="b" style="left:440.2px;top:982.2px;width:134.8px;height:37.8px;background:#4c4c4c;border-radius:4.5px;border:1px solid #a6a6a6;border-top-color:#8a8a8a;box-shadow:0 0 1.5px rgba(40,40,40,.5);"></div>
<span class="t" style="left:501.43px;top:1024.91px;font-size:10.5px;line-height:10.5px;color:#3c3c3c;font-weight:bold;transform:scaleX(1.0400);">30</span>
<div class="b" style="left:580.8px;top:978px;width:143.4px;height:61.3px;background:linear-gradient(180deg,#a6a6a6 0%,#939393 8%,#7a7a7a 50%,#5d5d5d 100%);border-radius:5px;"></div>
<div class="b" style="left:585.1999999999999px;top:982.2px;width:134.8px;height:37.8px;background:#666666;border-radius:4.5px;border:1px solid #a6a6a6;border-top-color:#8a8a8a;box-shadow:0 0 1.5px rgba(40,40,40,.5);"></div>
<span class="t" style="left:646.43px;top:1024.91px;font-size:10.5px;line-height:10.5px;color:#3c3c3c;font-weight:bold;transform:scaleX(1.0400);">40</span>
<div class="b" style="left:725.8px;top:978px;width:143.4px;height:61.3px;background:linear-gradient(180deg,#a6a6a6 0%,#939393 8%,#7a7a7a 50%,#5d5d5d 100%);border-radius:5px;"></div>
<div class="b" style="left:730.1999999999999px;top:982.2px;width:134.8px;height:37.8px;background:#808080;border-radius:4.5px;border:1px solid #a6a6a6;border-top-color:#8a8a8a;box-shadow:0 0 1.5px rgba(40,40,40,.5);"></div>
<span class="t" style="left:791.43px;top:1024.91px;font-size:10.5px;line-height:10.5px;color:#3c3c3c;font-weight:bold;transform:scaleX(1.0400);">50</span>
<div class="b" style="left:870.8px;top:978px;width:143.4px;height:61.3px;background:linear-gradient(180deg,#a6a6a6 0%,#939393 8%,#7a7a7a 50%,#5d5d5d 100%);border-radius:5px;"></div>
<div class="b" style="left:875.1999999999999px;top:982.2px;width:134.8px;height:37.8px;background:#999999;border-radius:4.5px;border:1px solid #a6a6a6;border-top-color:#8a8a8a;box-shadow:0 0 1.5px rgba(40,40,40,.5);"></div>
<span class="t" style="left:936.43px;top:1024.91px;font-size:10.5px;line-height:10.5px;color:#3c3c3c;font-weight:bold;transform:scaleX(1.0400);">60</span>
<div class="b" style="left:1015.8px;top:978px;width:143.4px;height:61.3px;background:linear-gradient(180deg,#a6a6a6 0%,#939393 8%,#7a7a7a 50%,#5d5d5d 100%);border-radius:5px;"></div>
<div class="b" style="left:1020.1999999999999px;top:982.2px;width:134.8px;height:37.8px;background:#b2b2b2;border-radius:4.5px;border:1px solid #a6a6a6;border-top-color:#8a8a8a;box-shadow:0 0 1.5px rgba(40,40,40,.5);"></div>
<span class="t" style="left:1081.43px;top:1024.91px;font-size:10.5px;line-height:10.5px;color:#3c3c3c;font-weight:bold;transform:scaleX(1.0400);">70</span>
<div class="b" style="left:1160.8px;top:978px;width:143.4px;height:61.3px;background:linear-gradient(180deg,#a6a6a6 0%,#939393 8%,#7a7a7a 50%,#5d5d5d 100%);border-radius:5px;"></div>
<div class="b" style="left:1165.2px;top:982.2px;width:134.8px;height:37.8px;background:#cccccc;border-radius:4.5px;border:1px solid #a6a6a6;border-top-color:#8a8a8a;box-shadow:0 0 1.5px rgba(40,40,40,.5);"></div>
<span class="t" style="left:1226.43px;top:1024.91px;font-size:10.5px;line-height:10.5px;color:#3c3c3c;font-weight:bold;transform:scaleX(1.0400);">80</span>
<div class="b" style="left:1305.8px;top:978px;width:143.4px;height:61.3px;background:linear-gradient(180deg,#a6a6a6 0%,#939393 8%,#7a7a7a 50%,#5d5d5d 100%);border-radius:5px;"></div>
<div class="b" style="left:1310.2px;top:982.2px;width:134.8px;height:37.8px;background:#e6e6e6;border-radius:4.5px;border:1px solid #a6a6a6;border-top-color:#8a8a8a;box-shadow:0 0 1.5px rgba(40,40,40,.5);"></div>
<span class="t" style="left:1371.43px;top:1024.91px;font-size:10.5px;line-height:10.5px;color:#3c3c3c;font-weight:bold;transform:scaleX(1.0400);">90</span>
<div class="b" style="left:1450.8px;top:978px;width:143.4px;height:61.3px;background:linear-gradient(180deg,#727272 0%,#5e5e5e 10%,#484848 60%,#383838 100%);border-radius:5px;"></div>
<div class="b" style="left:1455.2px;top:982.2px;width:134.8px;height:37.8px;background:#ffffff;border-radius:4.5px;border:1px solid #ddd;border-top-color:#ccc;box-shadow:0 0 1.5px rgba(40,40,40,.5);"></div>
<span class="t" style="left:1513.39px;top:1024.91px;font-size:10.5px;line-height:10.5px;color:#fff;font-weight:bold;transform:scaleX(1.0400);">100</span>
<div class="b" style="left:1597px;top:978px;width:48px;height:18.5px;background:linear-gradient(180deg,#a6a6a6 0%,#939393 8%,#7a7a7a 50%,#5d5d5d 100%);border-radius:5px 5px 0 0;"></div>
<div class="b" style="left:1597px;top:997px;width:48px;height:42px;background:linear-gradient(180deg,#a6a6a6 0%,#939393 8%,#7a7a7a 50%,#5d5d5d 100%);border-radius:0 0 5px 5px;"></div>
<div class="ck" style="left:1614px;top:979.5px;width:15px;height:15px;background:linear-gradient(180deg,#6a6a6a,#8a8a8a);"></div>
<div class="b" style="left:1604.7px;top:1001.7px;width:32.6px;height:32.6px;border:2.6px solid #181818;border-radius:6px;background:linear-gradient(180deg,#ababab 0%,#a6a6a6 48%,#6e6e6e 52%,#6a6a6a 100%);box-shadow:0 0 0 1px #b4b4b4;"></div>
<div class="b" style="left:1613.9px;top:1011px;width:14.2px;height:14px;background:linear-gradient(180deg,#1e1e1e 49%,#000 51%);"></div>
<div class="b" style="left:1646px;top:978px;width:45.99999999999996px;height:30px;background:linear-gradient(180deg,#a6a6a6 0%,#939393 8%,#7a7a7a 50%,#5d5d5d 100%);border-radius:5px 0 0 0;"></div>
<div class="ck" style="left:1658.8px;top:982.5px;width:20.5px;height:20.5px;background:linear-gradient(180deg,#6a6a6a,#9c9c9c);"></div>
<div class="b" style="left:1692.8px;top:978px;width:44.40000000000005px;height:30px;background:linear-gradient(180deg,#a6a6a6 0%,#939393 8%,#7a7a7a 50%,#5d5d5d 100%);"></div>
<div class="ck" style="left:1704.4px;top:982.5px;width:20.5px;height:20.5px;background:linear-gradient(180deg,#6a6a6a,#9c9c9c);"></div>
<div class="b" style="left:1738px;top:978px;width:44.2px;height:30px;background:linear-gradient(180deg,#a6a6a6 0%,#939393 8%,#7a7a7a 50%,#5d5d5d 100%);"></div>
<div class="ck" style="left:1749.8px;top:982.5px;width:20.5px;height:20.5px;background:linear-gradient(180deg,#6a6a6a,#9c9c9c);"></div>
<div class="b" style="left:1783px;top:978px;width:44.2px;height:30px;background:linear-gradient(180deg,#a6a6a6 0%,#939393 8%,#7a7a7a 50%,#5d5d5d 100%);"></div>
<div class="ck" style="left:1795.0px;top:982.5px;width:20.5px;height:20.5px;background:linear-gradient(180deg,#6a6a6a,#9c9c9c);"></div>
<div class="b" style="left:1828px;top:978px;width:44.2px;height:30px;background:linear-gradient(180deg,#a6a6a6 0%,#939393 8%,#7a7a7a 50%,#5d5d5d 100%);"></div>
<div class="ck" style="left:1840.1px;top:982.5px;width:20.5px;height:20.5px;background:linear-gradient(180deg,#6a6a6a,#9c9c9c);"></div>
<div class="b" style="left:1873px;top:978px;width:46px;height:30.5px;background:linear-gradient(180deg,#3e3e3e,#2e2e2e);border-radius:0 5px 0 0;"></div>
<div class="ck" style="left:1885.7px;top:982.5px;width:20.6px;height:20.6px;background:linear-gradient(180deg,#282828,#3c3c3c);"></div>
<div class="b" style="left:1646px;top:1009px;width:136.3px;height:30.3px;background:linear-gradient(180deg,#a6a6a6 0%,#939393 8%,#7a7a7a 50%,#5d5d5d 100%);border-radius:4px 0 0 5px;"></div>
<div class="b" style="left:1783px;top:1009px;width:135.6px;height:30.3px;background:linear-gradient(180deg,#a6a6a6 0%,#939393 8%,#7a7a7a 50%,#5d5d5d 100%);border-radius:0 5px 5px 0;"></div>
<div class="ck" style="left:1666.7px;top:1013.5px;width:20.5px;height:20.5px;background:linear-gradient(180deg,#6a6a6a,#9c9c9c);"></div>
<div class="ck" style="left:1879.7px;top:1013.5px;width:20.5px;height:20.5px;background:linear-gradient(180deg,#6a6a6a,#9c9c9c);"></div>
<span class="t" style="left:1704.00px;top:1015.00px;font-size:21.5px;line-height:21.5px;color:#2a2a2a;transform:scaleX(1.0521);-webkit-text-stroke:0.4px #2a2a2a;">Back</span>
<span class="t" style="left:1809.30px;top:1015.00px;font-size:21.5px;line-height:21.5px;color:#2a2a2a;transform:scaleX(1.1910);-webkit-text-stroke:0.4px #2a2a2a;">Next</span>
<svg width="1920" height="1048"><path d="M1617 988.6h9l-4.5-4.4z" fill="#2a2a2a"/><rect x="1665" y="989" width="8" height="7.5" fill="#2a2a2a"/><path d="M1711.5 987.5v11l9-5.5z" fill="#2a2a2a"/><path d="M1757.6 988h-2.6v9.8h2.6M1763.2 988h2.6v9.8h-2.6" stroke="#2a2a2a" stroke-width="2" fill="none"/><path d="M1758.4 992.9h1.5M1760.9 992.9h1.5" stroke="#2a2a2a" stroke-width="1.6"/><path d="M1805.5 992.8c-2-3.3-6.3-3.3-6.3 0s4.3 3.3 6.3 0c2-3.3 6.3-3.3 6.3 0s-4.3 3.3-6.3 0z" stroke="#2a2a2a" stroke-width="1.7" fill="none"/><path d="M1845.3 992a5.2 5.2 0 0 1 9-2.6M1855.7 993.6a5.2 5.2 0 0 1-9 2.6" stroke="#2a2a2a" stroke-width="2.1" fill="none"/><path d="M1856.3 986.3v4.9h-4.9zM1844.7 999.3v-4.9h4.9z" fill="#2a2a2a"/><path d="M1676.5 1019l-4 4.8 4 4.8M1681.5 1019l-4 4.8 4 4.8" stroke="#2a2a2a" stroke-width="1.7" fill="none"/><path d="M1886 1019l4.2 4.8-4.2 4.8M1891 1019l4.2 4.8-4.2 4.8" stroke="#2a2a2a" stroke-width="1.7" fill="none"/></svg>
<div class="b" style="left:0px;top:1039.3px;width:1920px;height:0.9px;background:#222;"></div>
<div class="b" style="left:0px;top:1040px;width:1920px;height:8px;background:linear-gradient(90deg,#2b6e9d 0%,#2b72a1 59%,#3195b3 60.5%,#2e8cac 100%);"></div>
<div class="b" style="left:237.5px;top:1040.8px;width:58.5px;height:8px;background:#7ba4bf;border:1px solid #b4cfe0;border-bottom:none;"></div>
<svg width="1920" height="1048"><path d="M10 1048l27-1.4v1.4z" fill="#e8eef4"/><path d="M67 1047h15v1H67z" fill="#e8c860"/><path d="M148 1048c2-2 5-3.5 8-3.5l4 3.5z" fill="#e8b060"/><circle cx="205" cy="1055.5" r="10.5" fill="#38a8e8"/><path d="M252 1048c2-3 5-4.5 8-4l5 4z" fill="#300808"/><path d="M1120 1040h16l20 8h-36z" fill="#2b72a1"/></svg>
</body></html>
